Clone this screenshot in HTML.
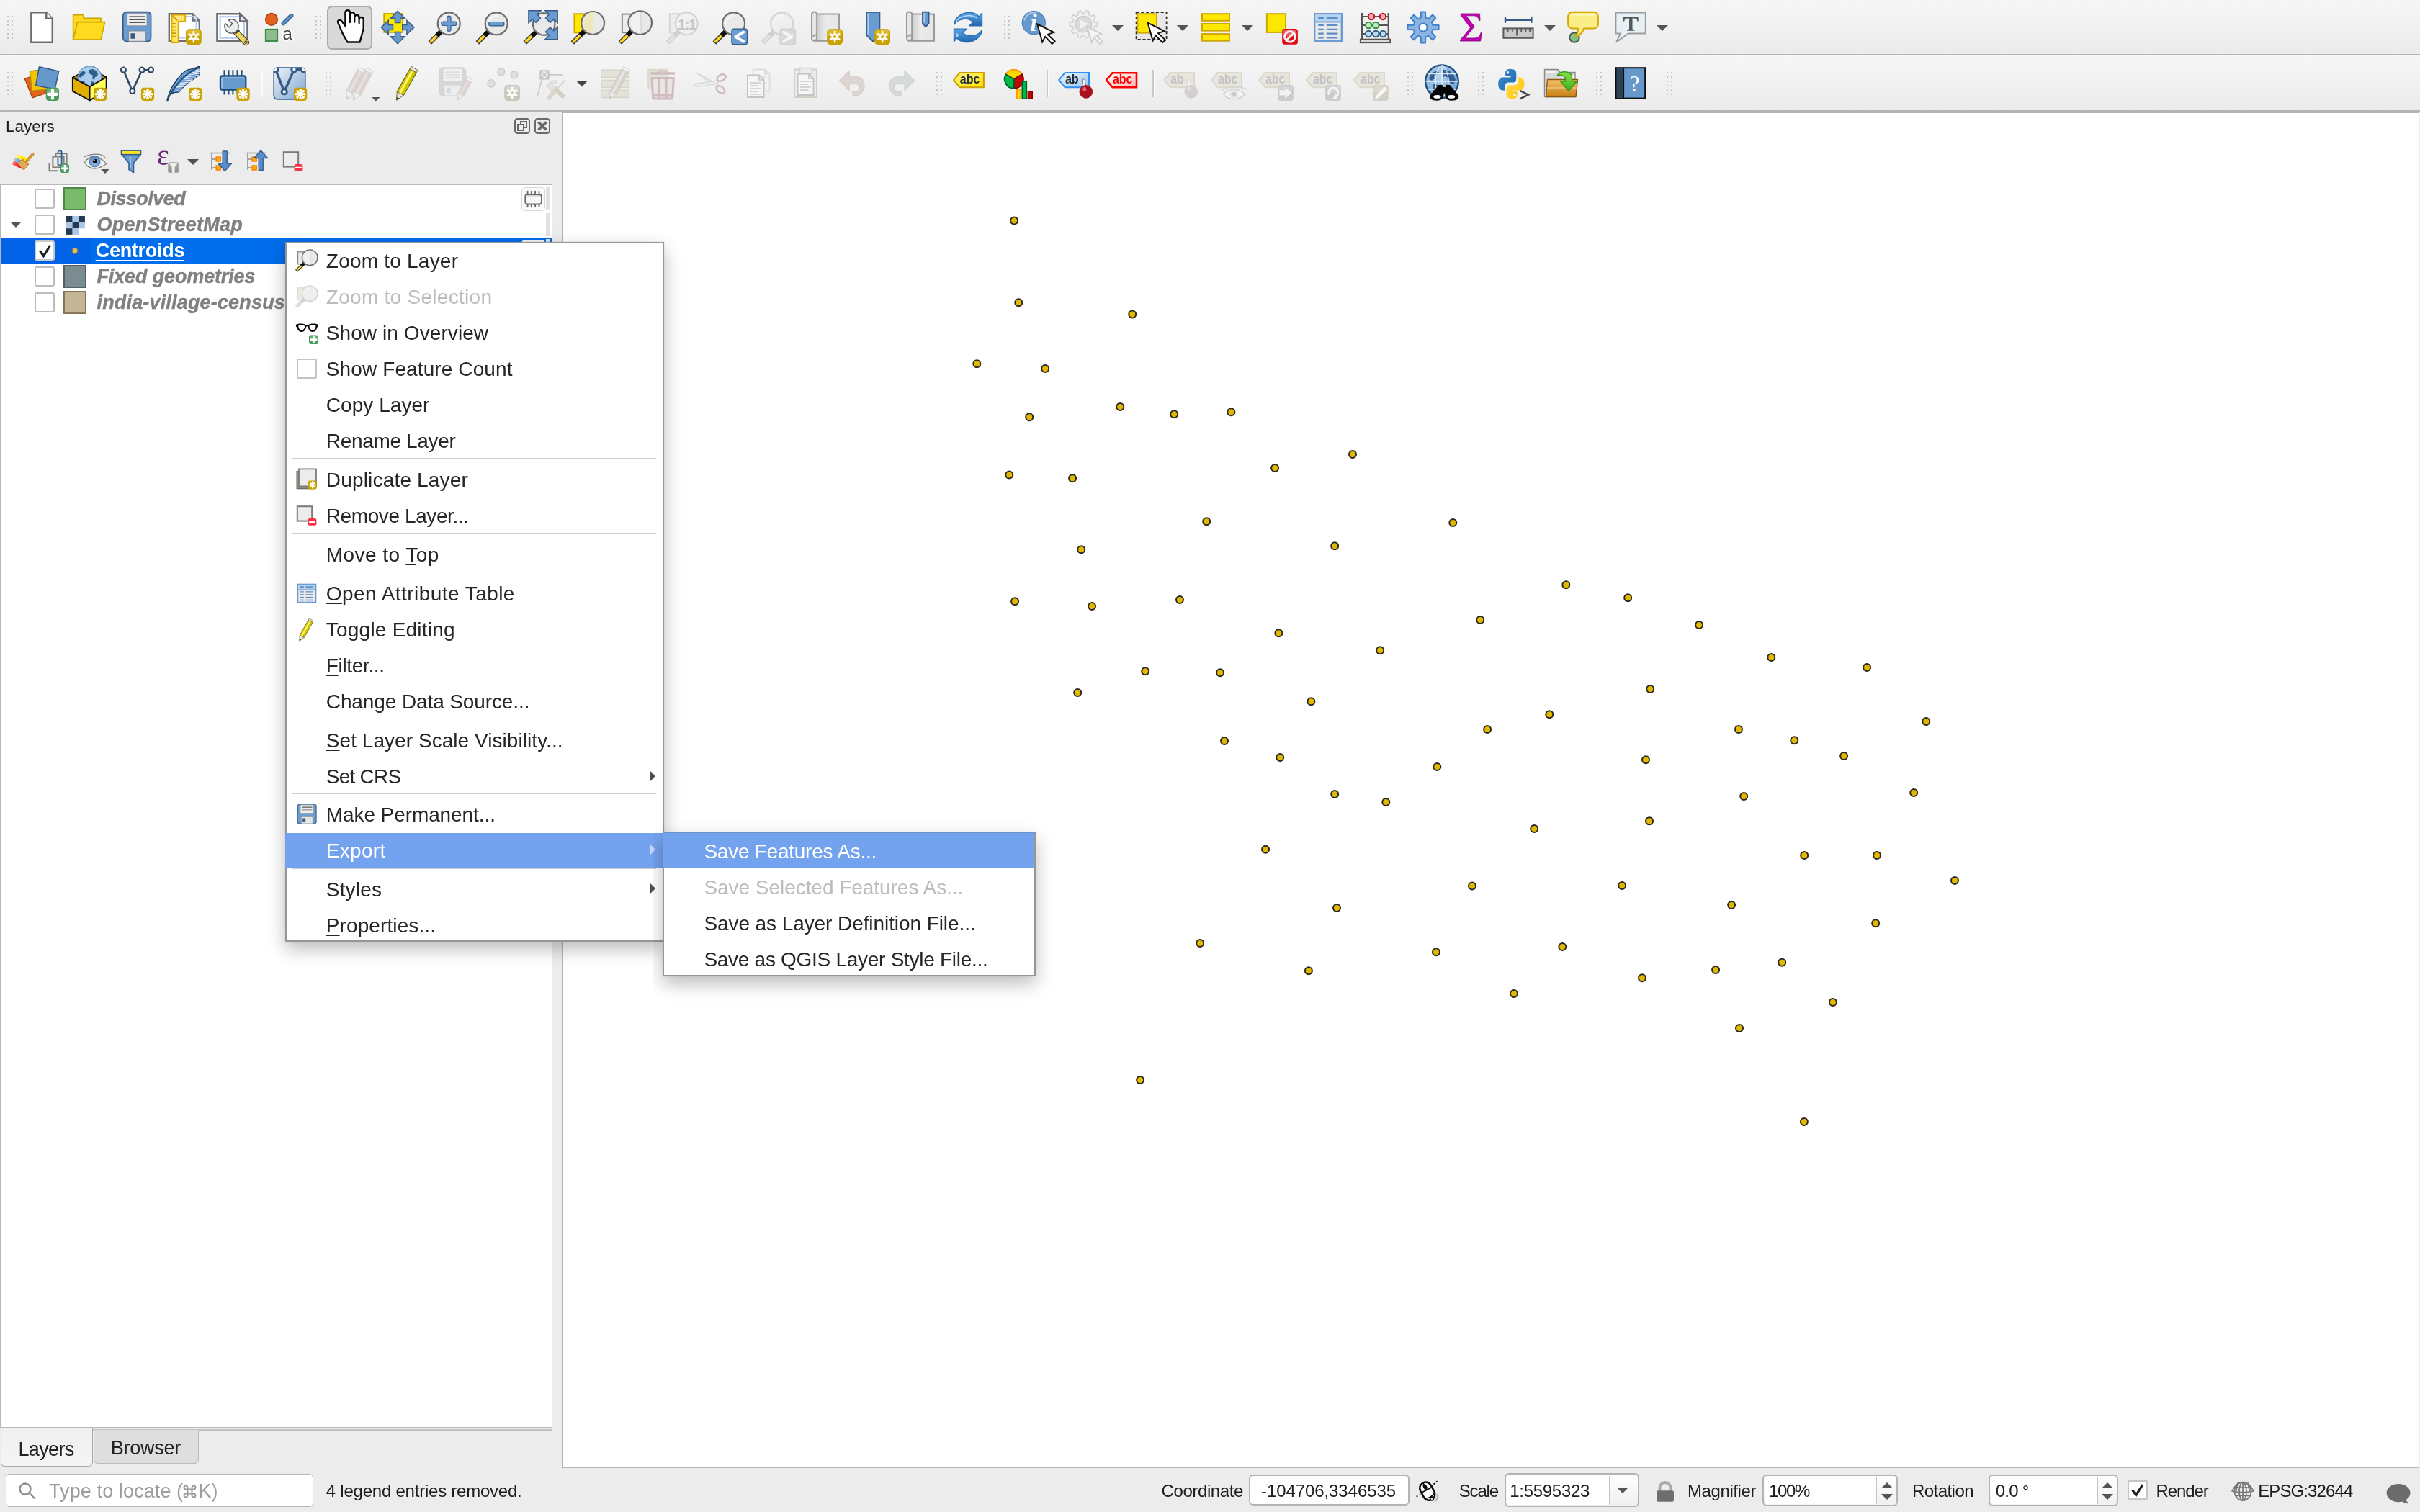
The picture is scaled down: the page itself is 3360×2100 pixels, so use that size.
<!DOCTYPE html>
<html><head><meta charset="utf-8"><title>QGIS</title><style>
html,body{margin:0;padding:0}
body{width:3360px;height:2100px;overflow:hidden;position:relative;background:#ececec;font-family:"Liberation Sans",sans-serif}
#w{position:absolute;left:0;top:0;width:3360px;height:2100px;will-change:transform}
#w>*{position:absolute;display:block}
.t{white-space:nowrap}
u{text-decoration:underline;text-decoration-thickness:1.3px;text-underline-offset:4px}
svg{overflow:visible}
</style></head><body><div id="w">
<div style="left:0px;top:0px;width:3360px;height:75px;background:linear-gradient(#f6f6f6,#ebebeb)"></div>
<div style="left:0px;top:75px;width:3360px;height:2px;background:#b6b6b6"></div>
<div style="left:0px;top:77px;width:3360px;height:76px;background:linear-gradient(#f6f6f6,#ebebeb)"></div>
<div style="left:0px;top:153px;width:3360px;height:2px;background:#b2b2b2"></div>
<svg style="left:10px;top:22px;width:8px;height:32px" viewBox="0 0 8 32" fill="#c4c4c4"><rect x="0" y="0" width="2" height="2"/><rect x="6" y="0" width="2" height="2"/><rect x="0" y="6" width="2" height="2"/><rect x="6" y="6" width="2" height="2"/><rect x="0" y="12" width="2" height="2"/><rect x="6" y="12" width="2" height="2"/><rect x="0" y="18" width="2" height="2"/><rect x="6" y="18" width="2" height="2"/><rect x="0" y="24" width="2" height="2"/><rect x="6" y="24" width="2" height="2"/><rect x="0" y="30" width="2" height="2"/><rect x="6" y="30" width="2" height="2"/></svg>
<svg style="left:438px;top:22px;width:8px;height:32px" viewBox="0 0 8 32" fill="#c4c4c4"><rect x="0" y="0" width="2" height="2"/><rect x="6" y="0" width="2" height="2"/><rect x="0" y="6" width="2" height="2"/><rect x="6" y="6" width="2" height="2"/><rect x="0" y="12" width="2" height="2"/><rect x="6" y="12" width="2" height="2"/><rect x="0" y="18" width="2" height="2"/><rect x="6" y="18" width="2" height="2"/><rect x="0" y="24" width="2" height="2"/><rect x="6" y="24" width="2" height="2"/><rect x="0" y="30" width="2" height="2"/><rect x="6" y="30" width="2" height="2"/></svg>
<svg style="left:1394px;top:22px;width:8px;height:32px" viewBox="0 0 8 32" fill="#c4c4c4"><rect x="0" y="0" width="2" height="2"/><rect x="6" y="0" width="2" height="2"/><rect x="0" y="6" width="2" height="2"/><rect x="6" y="6" width="2" height="2"/><rect x="0" y="12" width="2" height="2"/><rect x="6" y="12" width="2" height="2"/><rect x="0" y="18" width="2" height="2"/><rect x="6" y="18" width="2" height="2"/><rect x="0" y="24" width="2" height="2"/><rect x="6" y="24" width="2" height="2"/><rect x="0" y="30" width="2" height="2"/><rect x="6" y="30" width="2" height="2"/></svg>
<div style="left:454.3px;top:8px;width:63.2px;height:61.4px;background:#d9d9d9;border:2px solid #ababab;border-radius:7px;box-sizing:border-box"></div>
<svg style="left:34.0px;top:14.0px;width:48px;height:48px;" viewBox="0 0 48 48"><path d="M9.4 3.2H30.2L38.8 11.8V44.8H9.4Z" fill="#fff" stroke="#6e6e6e" stroke-width="2.5"/><path d="M30.2 3.2V11.8H38.8" fill="#fff" stroke="#6e6e6e" stroke-width="2.5"/></svg>
<svg style="left:99.4px;top:14.0px;width:48px;height:48px;" viewBox="0 0 48 48"><path d="M2.6 40.5V6.6H17V11.2H41V40.5Z" fill="#ffd91e" stroke="#c9a300" stroke-width="1.6" stroke-linejoin="round"/><path d="M8.6 16.6H46.6L41 41H2.6Z" fill="#ffdb20" stroke="#c9a300" stroke-width="1.6" stroke-linejoin="round"/></svg>
<svg style="left:165.8px;top:14.0px;width:48px;height:48px;" viewBox="0 0 48 48"><rect x="4.8" y="2.6" width="38.8" height="41" rx="5" fill="#6a9bd1" stroke="#355b86" stroke-width="1.6"/><rect x="10.6" y="4.4" width="27.4" height="17.4" rx="1.5" fill="#ececec" stroke="#8a8a8a" stroke-opacity="0.8" stroke-width="1"/><path d="M13.4 9.2H35.2M13.4 13.2H35.2M13.4 17.2H35.2" stroke="#5a5a5a" stroke-width="1.8"/><rect x="12.4" y="29" width="24" height="14.4" rx="1.2" fill="#e6e6e6" stroke="#7d8792" stroke-opacity="0.9" stroke-width="1.2"/><rect x="15.4" y="32.2" width="5.8" height="7.6" fill="#3a5a80"/></svg>
<svg style="left:232.2px;top:14.0px;width:48px;height:48px;" viewBox="0 0 48 48"><path d="M2.8 5.2H35.5L44.8 14.5V43H2.8Z" fill="#fff" stroke="#6e6e6e" stroke-width="2.4"/><path d="M35.5 5.2V14.5H44.8" fill="#f4f4f4" stroke="#6e6e6e" stroke-width="2.4"/><path d="M14 9H40.5V38.5H14" fill="none" stroke="#b9ccf5" stroke-width="2.2"/><path d="M6.6 6.6H25.2V15.6H15.6V45H6.6Z" fill="#ffe873" stroke="#d9a900" stroke-width="1.8"/><path d="M7.5 15.5V44H11" fill="none" stroke="#ffd21f" stroke-width="1.6"/><path d="M6.6 19H12M6.6 23.4H12M6.6 27.8H12M6.6 32.2H12M6.6 36.6H12M6.6 7L14 14.5" stroke="#cf9d00" stroke-width="1.8"/><rect x="26" y="26.2" width="21.8" height="21.8" rx="4.5" fill="#c9a100"/><rect x="27.5" y="27.7" width="18.8" height="9" rx="3" fill="#e0bf3a" opacity=".8"/><line x1="36.9" y1="28.9" x2="36.9" y2="45.3" stroke="#fff" stroke-width="2.6"/><line x1="44.0" y1="33.0" x2="29.8" y2="41.2" stroke="#fff" stroke-width="2.6"/><line x1="44.0" y1="41.2" x2="29.8" y2="33.0" stroke="#fff" stroke-width="2.6"/><circle cx="36.9" cy="37.1" r="4.6" fill="#fff"/><circle cx="36.9" cy="37.1" r="2" fill="#c9a100"/></svg>
<svg style="left:298.6px;top:14.0px;width:48px;height:48px;" viewBox="0 0 48 48"><path d="M2.400 5.200H34.200L44.400 15.400V43H2.400Z" fill="#fff" stroke="#6e6e6e" stroke-width="2.400"/><rect x="6.600" y="9.200" width="33.400" height="29.600" fill="none" stroke="#b9ccf5" stroke-width="2.200"/><path d="M34.200 5.200V15.400H44.400Z" fill="#f1f1f1" stroke="#6e6e6e" stroke-width="2.400" stroke-linejoin="miter"/><path d="M26 27.500L42.800 45" stroke="#3d3523" stroke-width="8.600" stroke-linecap="round"/><path d="M26 27.500L42.800 45" stroke="#f2d563" stroke-width="6.200" stroke-linecap="round"/><path d="M27.500 32.500l5.500-5" stroke="#3d3523" stroke-width="2.800"/><circle cx="42.400" cy="44.600" r="1.900" fill="#b9b9b0" stroke="#3d3523" stroke-width=".900"/><path d="M18.5 13.8L23.8 19.1L19.1 23.8L13.8 18.5A9.6 9.6 0 1 0 18.5 13.8Z" fill="#e9eeee" stroke="#5d5d5d" stroke-width="1.400" stroke-linejoin="round"/></svg>
<svg style="left:365.0px;top:14.0px;width:48px;height:48px;" viewBox="0 0 48 48"><circle cx="12" cy="12.900" r="8.300" fill="#e2621e" stroke="#a34210" stroke-width="1.600"/><path d="M28.400 18.600L39.600 7.600" stroke="#355b86" stroke-width="5.600" stroke-linecap="round"/><path d="M28.400 18.600L39.600 7.600" stroke="#5c8fc9" stroke-width="3.400" stroke-linecap="round"/><rect x="3.800" y="26.800" width="16.400" height="16.200" fill="#8cbb8c" stroke="#38883f" stroke-width="1.800"/><text x="27.400" y="41.400" font-family="Liberation Sans" font-size="24" fill="#fff" stroke="#fff" stroke-width="3.500" stroke-linejoin="round">a</text><text x="27.400" y="41.400" font-family="Liberation Sans" font-size="24" fill="#414141">a</text></svg>
<svg style="left:461.9px;top:14.0px;width:48px;height:48px;" viewBox="0 0 48 48"><path d="M7.200 17.200C6.200 14.200 10 12.400 12.200 15L17.400 22V3.400C17.400 -0.900 23.900 -0.900 23.900 3.400V6C24.400 2.400 30.200 2.600 30.300 6.400V9.400C31 6 36.400 6.400 36.600 9.800V12.400C37.400 9 42.400 9.400 42.700 12.800V25.700L37.600 44.500H20.400C17.500 39 14 34 12.500 29.600Z" fill="#fff" stroke="#0c0c0c" stroke-width="2.400" stroke-linejoin="round"/><path d="M23.900 5V17.100M30.300 8V16.700M36.600 11V18.400" stroke="#0c0c0c" stroke-width="2.200" stroke-linecap="round"/></svg>
<svg style="left:527.8px;top:14.0px;width:48px;height:48px;" viewBox="0 0 48 48"><rect x="5.300" y="5" width="25.800" height="25.800" fill="#ffe800" stroke="#cfa500" stroke-width="2"/><path d="M30.7 20.4L36.9 20.4L36.9 14.2L46.9 24.0L36.9 33.8L36.9 27.6L30.7 27.6Z" fill="#6699cc" stroke="#3a5f86" stroke-width="1.500" stroke-linejoin="miter"/><path d="M27.8 30.6L27.8 36.8L33.9 36.8L24.1 46.8L14.3 36.8L20.5 36.8L20.5 30.6Z" fill="#6699cc" stroke="#3a5f86" stroke-width="1.500" stroke-linejoin="miter"/><path d="M17.5 27.6L11.3 27.6L11.3 33.8L1.3 24.0L11.3 14.2L11.3 20.4L17.5 20.4Z" fill="#6699cc" stroke="#3a5f86" stroke-width="1.500" stroke-linejoin="miter"/><path d="M20.5 17.4L20.4 11.2L14.3 11.2L24.1 1.2L33.9 11.2L27.7 11.2L27.8 17.4Z" fill="#6699cc" stroke="#3a5f86" stroke-width="1.500" stroke-linejoin="miter"/></svg>
<svg style="left:592.6px;top:14.0px;width:48px;height:48px;" viewBox="0 0 48 48"><line x1="18.9" y1="30.2" x2="3.8" y2="45.5" stroke="#3b3b3b" stroke-width="6.4"/><line x1="13.6" y1="35.6" x2="4.7" y2="44.6" stroke="#ffd321" stroke-width="3.5"/><line x1="18.9" y1="30.2" x2="13.6" y2="35.6" stroke="#0c0c0c" stroke-width="6.4"/><circle cx="30.2" cy="18.8" r="15.5" fill="#e9e9e9" stroke="#6c6c6c" stroke-width="2.2"/><path d="M19.9 18.0A11.0 11.0 0 0 1 31.0 7.8" fill="none" stroke="#ffffff" stroke-opacity="0.55" stroke-width="2.6" stroke-linecap="round"/><path d="M30.400 10.800V26.800M22.400 18.800H38.400" stroke="#355b86" stroke-width="6.4" stroke-linecap="round"/><path d="M30.400 10.800V26.800M22.400 18.800H38.400" stroke="#6a9bd1" stroke-width="4.2" stroke-linecap="round"/></svg>
<svg style="left:658.9px;top:14.0px;width:48px;height:48px;" viewBox="0 0 48 48"><line x1="18.9" y1="30.2" x2="3.8" y2="45.5" stroke="#3b3b3b" stroke-width="6.4"/><line x1="13.6" y1="35.6" x2="4.7" y2="44.6" stroke="#ffd321" stroke-width="3.5"/><line x1="18.9" y1="30.2" x2="13.6" y2="35.6" stroke="#0c0c0c" stroke-width="6.4"/><circle cx="30.2" cy="18.8" r="15.5" fill="#e9e9e9" stroke="#6c6c6c" stroke-width="2.2"/><path d="M19.9 18.0A11.0 11.0 0 0 1 31.0 7.8" fill="none" stroke="#ffffff" stroke-opacity="0.55" stroke-width="2.6" stroke-linecap="round"/><path d="M22.200 19.200H38.400" stroke="#355b86" stroke-width="6.4" stroke-linecap="round"/><path d="M22.200 19.200H38.400" stroke="#6a9bd1" stroke-width="4.2" stroke-linecap="round"/></svg>
<svg style="left:724.6px;top:14.0px;width:48px;height:48px;" viewBox="0 0 48 48"><line x1="18.9" y1="30.7" x2="3.8" y2="45.5" stroke="#3b3b3b" stroke-width="6.4"/><line x1="13.5" y1="35.9" x2="4.7" y2="44.6" stroke="#ffd321" stroke-width="3.5"/><line x1="18.9" y1="30.7" x2="13.5" y2="35.9" stroke="#0c0c0c" stroke-width="6.4"/><circle cx="30.2" cy="19.5" r="15.3" fill="#e9e9e9" stroke="#6c6c6c" stroke-width="2.2"/><path d="M20.0 18.7A10.8 10.8 0 0 1 31.0 8.7" fill="none" stroke="#ffffff" stroke-opacity="0.55" stroke-width="2.6" stroke-linecap="round"/><path d="M8.9 0.7L26.1 0.7L20.7 6.1L25.6 11.0L19.2 17.4L14.3 12.5L8.9 17.9Z" fill="#6a9bd1" stroke="#355b86" stroke-width="1.4"/><path d="M49.2 0.7L32.0 0.7L37.4 6.1L32.5 11.0L38.9 17.4L43.8 12.5L49.2 17.9Z" fill="#6a9bd1" stroke="#355b86" stroke-width="1.4"/><path d="M49.2 40.6L32.0 40.6L37.4 35.2L32.5 30.3L38.9 23.9L43.8 28.8L49.2 23.4Z" fill="#6a9bd1" stroke="#355b86" stroke-width="1.4"/></svg>
<svg style="left:790.5px;top:14.0px;width:48px;height:48px;" viewBox="0 0 48 48"><rect x="6.5" y="5.300" width="26" height="26" fill="#ffe800" stroke="#cfa500" stroke-width="2"/><line x1="20.3" y1="29.4" x2="3.8" y2="45.5" stroke="#3b3b3b" stroke-width="6.4"/><line x1="14.9" y1="34.7" x2="4.7" y2="44.6" stroke="#ffd321" stroke-width="3.5"/><line x1="20.3" y1="29.4" x2="14.9" y2="34.7" stroke="#0c0c0c" stroke-width="6.4"/><circle cx="32.1" cy="17.9" r="15.9" fill="#e9e9e9" stroke="#6c6c6c" stroke-width="2.2"/><path d="M21.6 17.0A11.2 11.2 0 0 1 33.0 6.7" fill="none" stroke="#ffffff" stroke-opacity="0.55" stroke-width="2.6" stroke-linecap="round"/><path d="M33.500 2.300A15.700 15.700 0 0 0 33.500 33.500Z" fill="#efe6b6" opacity=".9"/></svg>
<svg style="left:856.6px;top:14.0px;width:48px;height:48px;" viewBox="0 0 48 48"><rect x="6.8" y="5.600" width="26" height="25.600" fill="#ececec" stroke="#8a8a8a" stroke-width="2"/><line x1="19.7" y1="29.6" x2="3.8" y2="45.5" stroke="#3b3b3b" stroke-width="6.4"/><line x1="14.4" y1="34.9" x2="4.7" y2="44.6" stroke="#ffd321" stroke-width="3.5"/><line x1="19.7" y1="29.6" x2="14.4" y2="34.9" stroke="#0c0c0c" stroke-width="6.4"/><circle cx="31.7" cy="17.6" r="16.3" fill="#e9e9e9" stroke="#6c6c6c" stroke-width="2.2"/><path d="M20.9 16.7A11.5 11.5 0 0 1 32.6 6.1" fill="none" stroke="#ffffff" stroke-opacity="0.55" stroke-width="2.6" stroke-linecap="round"/><path d="M33 2.200A15.500 15.500 0 0 0 33 33Z" fill="#f1f1f1" opacity=".9"/><path d="M33 3V32.500" stroke="#cfcfcf" stroke-width="1"/></svg>
<svg style="left:922.6px;top:14.0px;width:48px;height:48px;" viewBox="0 0 48 48"><rect x="6.800" y="5.200" width="26" height="26" fill="#ededed" stroke="#d6d6d6" stroke-width="2"/><line x1="18.9" y1="30.2" x2="3.8" y2="45.5" stroke="#d2d2d2" stroke-width="6.4"/><line x1="13.6" y1="35.6" x2="4.7" y2="44.6" stroke="#e6e3dc" stroke-width="3.5"/><line x1="18.9" y1="30.2" x2="13.6" y2="35.6" stroke="#cfcfcf" stroke-width="6.4"/><circle cx="30.2" cy="18.8" r="15.5" fill="#efefef" stroke="#d3d3d3" stroke-width="2.2"/><path d="M19.9 18.0A11.0 11.0 0 0 1 31.0 7.8" fill="none" stroke="#ffffff" stroke-opacity="0.4" stroke-width="2.6" stroke-linecap="round"/><text x="30.400" y="26.600" text-anchor="middle" font-family="Liberation Sans" font-weight="bold" font-size="20" letter-spacing="-1.2" fill="#c6c6c6">1:1</text></svg>
<svg style="left:988.3px;top:14.0px;width:48px;height:48px;" viewBox="0 0 48 48"><line x1="19.2" y1="30.2" x2="3.8" y2="45.5" stroke="#3b3b3b" stroke-width="6.4"/><line x1="13.9" y1="35.5" x2="4.7" y2="44.6" stroke="#ffd321" stroke-width="3.5"/><line x1="19.2" y1="30.2" x2="13.9" y2="35.5" stroke="#0c0c0c" stroke-width="6.4"/><circle cx="30.6" cy="18.8" r="15.5" fill="#e9e9e9" stroke="#6c6c6c" stroke-width="2.2"/><path d="M20.3 18.0A11.0 11.0 0 0 1 31.4 7.8" fill="none" stroke="#ffffff" stroke-opacity="0.55" stroke-width="2.6" stroke-linecap="round"/><rect x="27.900" y="26.100" width="21.600" height="21.600" rx="3" fill="#6a9bd1" stroke="#355b86" stroke-width="1.3"/><path d="M44.200 30.600L33 37.100L44.200 43.400" fill="none" stroke="#fff" stroke-width="3.800" stroke-linecap="round" stroke-linejoin="round"/></svg>
<svg style="left:1054.6px;top:14.0px;width:48px;height:48px;" viewBox="0 0 48 48"><line x1="19.2" y1="30.2" x2="3.8" y2="45.5" stroke="#d2d2d2" stroke-width="6.4"/><line x1="13.9" y1="35.5" x2="4.7" y2="44.6" stroke="#e6e3dc" stroke-width="3.5"/><line x1="19.2" y1="30.2" x2="13.9" y2="35.5" stroke="#cfcfcf" stroke-width="6.4"/><circle cx="30.6" cy="18.8" r="15.5" fill="#efefef" stroke="#d3d3d3" stroke-width="2.2"/><path d="M20.3 18.0A11.0 11.0 0 0 1 31.4 7.8" fill="none" stroke="#ffffff" stroke-opacity="0.4" stroke-width="2.6" stroke-linecap="round"/><rect x="27.900" y="26.100" width="21.600" height="21.600" rx="3" fill="#d7dadd" stroke="#cfd2d5" stroke-width="1.3"/><path d="M33.200 30.600L44.400 37.100L33.200 43.400" fill="none" stroke="#f6f6f6" stroke-width="3.800" stroke-linecap="round" stroke-linejoin="round"/></svg>
<svg style="left:1123.9px;top:14.0px;width:48px;height:48px;" viewBox="0 0 48 48"><defs><linearGradient id="scg" x1="0" x2="1"><stop offset="0" stop-color="#c9c9c9"/><stop offset=".45" stop-color="#ebebeb"/><stop offset="1" stop-color="#e6e6e6"/></linearGradient></defs><path d="M10 5.500H41V42.800H7.500" fill="url(#scg)" stroke="#9a9a9a" stroke-width="2"/><path d="M10.200 37V6.200C10.200 1.400 3 1.400 3 6.200V38.500C3 44.500 10.200 43.900 10.200 37.500C10.200 33 4.800 34 5.200 37.500" fill="#e6e6e6" stroke="#9a9a9a" stroke-width="2" stroke-linejoin="round"/><rect x="24.2" y="26.2" width="21.8" height="21.8" rx="4.5" fill="#c9a100"/><rect x="25.7" y="27.7" width="18.8" height="9" rx="3" fill="#e0bf3a" opacity=".8"/><line x1="35.1" y1="28.9" x2="35.1" y2="45.3" stroke="#fff" stroke-width="2.6"/><line x1="42.2" y1="33.0" x2="28.0" y2="41.2" stroke="#fff" stroke-width="2.6"/><line x1="42.2" y1="41.2" x2="28.0" y2="33.0" stroke="#fff" stroke-width="2.6"/><circle cx="35.1" cy="37.1" r="4.6" fill="#fff"/><circle cx="35.1" cy="37.1" r="2" fill="#c9a100"/></svg>
<svg style="left:1189.8px;top:14.0px;width:48px;height:48px;" viewBox="0 0 48 48"><path d="M13 2.8H31.4V34.9L22.2 43.4L13 34.9Z" fill="#6a9bd1" stroke="#355b86" stroke-width="1.800" stroke-linejoin="miter"/><path d="M15.2 4.3V33.9" stroke="#a9c9ec" stroke-width="1.600"/><rect x="24.2" y="26.2" width="21.8" height="21.8" rx="4.5" fill="#c9a100"/><rect x="25.7" y="27.7" width="18.8" height="9" rx="3" fill="#e0bf3a" opacity=".8"/><line x1="35.1" y1="28.9" x2="35.1" y2="45.3" stroke="#fff" stroke-width="2.6"/><line x1="42.2" y1="33.0" x2="28.0" y2="41.2" stroke="#fff" stroke-width="2.6"/><line x1="42.2" y1="41.2" x2="28.0" y2="33.0" stroke="#fff" stroke-width="2.6"/><circle cx="35.1" cy="37.1" r="4.6" fill="#fff"/><circle cx="35.1" cy="37.1" r="2" fill="#c9a100"/></svg>
<svg style="left:1255.9px;top:14.0px;width:48px;height:48px;" viewBox="0 0 48 48"><defs><linearGradient id="scg" x1="0" x2="1"><stop offset="0" stop-color="#c9c9c9"/><stop offset=".45" stop-color="#ebebeb"/><stop offset="1" stop-color="#e6e6e6"/></linearGradient></defs><path d="M10 5.500H41V42.800H7.500" fill="url(#scg)" stroke="#9a9a9a" stroke-width="2"/><path d="M10.200 37V6.200C10.200 1.400 3 1.400 3 6.200V38.500C3 44.500 10.200 43.900 10.200 37.500C10.200 33 4.800 34 5.200 37.500" fill="#e6e6e6" stroke="#9a9a9a" stroke-width="2" stroke-linejoin="round"/><path d="M25 2.6H33.6V18.400000000000002L29.3 23.400000000000002L25 18.400000000000002Z" fill="#6a9bd1" stroke="#355b86" stroke-width="1.800" stroke-linejoin="miter"/><path d="M27.2 4.1V17.400000000000002" stroke="#a9c9ec" stroke-width="1.600"/></svg>
<svg style="left:1320.0px;top:14.0px;width:48px;height:48px;" viewBox="0 0 48 48"><defs><linearGradient id="rfg" x1="0" y1="0" x2="0" y2="1"><stop offset="0" stop-color="#5aa5e6"/><stop offset="1" stop-color="#2266ad"/></linearGradient></defs><path d="M4.600 20.500C5.500 4.500 29 -2.500 39.500 9L43.600 3.800V22H25.500L31.300 16.800C24.500 9.500 9.500 11.500 4.600 20.500Z" fill="url(#rfg)" stroke="#2a6cb3" stroke-width="1.200" stroke-linejoin="round"/><path d="M43.400 27.500C42.500 43.500 19 50.500 8.500 39L4.400 44.200V26H22.500L16.700 31.200C23.500 38.500 38.500 36.500 43.400 27.500Z" fill="url(#rfg)" stroke="#2a6cb3" stroke-width="1.200" stroke-linejoin="round"/><path d="M7 17C11 8 27 4.500 36.500 11" fill="none" stroke="#cfe6fa" stroke-width="1.600" opacity=".8"/><path d="M7.500 31L7 40L12 34.500" fill="#bcdcf6" opacity=".8"/></svg>
<svg style="left:1418.0px;top:14.0px;width:48px;height:48px;" viewBox="0 0 48 48"><circle cx="17.300" cy="17.600" r="16.300" fill="#6698cd" stroke="#4c7fb8" stroke-width="1"/><path d="M4.500 14A13.500 13.500 0 0 1 20 3.800" fill="none" stroke="#a9c8ea" stroke-width="2" stroke-linecap="round"/><text x="17.200" y="28.800" text-anchor="middle" font-family="Liberation Serif" font-style="italic" font-weight="bold" font-size="33" fill="#fff">i</text><path d="M22.2 19.4L45.2 30.9L36.7 33.9L46.7 43.4L42.7 46.9L33.2 36.9L29.2 44.4Z" fill="#fff" stroke="#111" stroke-width="2" stroke-linejoin="miter"/></svg>
<svg style="left:1484.0px;top:14.0px;width:48px;height:48px;" viewBox="0 0 48 48"><path d="M35.2 16.9L39.4 17.5L39.4 21.9L35.2 22.5L34.1 26.2L37.0 29.2L34.5 32.7L30.7 30.8L27.6 33.0L28.3 37.2L24.1 38.5L22.2 34.8L18.4 34.8L16.5 38.5L12.3 37.2L13.0 33.0L9.9 30.8L6.1 32.7L3.6 29.2L6.5 26.2L5.4 22.5L1.2 21.9L1.2 17.5L5.4 16.9L6.5 13.2L3.6 10.2L6.1 6.7L9.9 8.6L13.0 6.4L12.3 2.2L16.5 0.9L18.4 4.6L22.2 4.6L24.1 0.9L28.3 2.2L27.6 6.4L30.7 8.6L34.5 6.7L37.0 10.2L34.1 13.2Z" fill="#f0f0f0" stroke="#d1d1d1" stroke-width="1.500" stroke-linejoin="round"/><circle cx="20.300" cy="19.700" r="11.200" fill="#d8dadc" stroke="#cbcbcb" stroke-width="1.300"/><path d="M15.800 13.200L27.200 19.600L15.800 26Z" fill="#f1f1f1"/><path d="M25.4 23.0L45.6 33.1L38.2 35.8L47.0 44.1L43.4 47.2L35.1 38.4L31.6 45.0Z" fill="#f4f4f4" stroke="#cfcfcf" stroke-width="2" stroke-linejoin="miter"/></svg>
<svg style="left:1574.6px;top:14.0px;width:48px;height:48px;" viewBox="0 0 48 48"><rect x="2.600" y="3.100" width="42" height="37.800" fill="#e8e8e8" stroke="#2d2d2d" stroke-width="1.800" stroke-dasharray="4.200 2.600"/><rect x="4.400" y="5.300" width="26.600" height="26.300" fill="#ffe800" stroke="#cfa500" stroke-width="2"/><path d="M18.6 17.6L41.6 29.1L33.1 32.1L43.1 41.6L39.1 45.1L29.6 35.1L25.6 42.6Z" fill="#fff" stroke="#111" stroke-width="2" stroke-linejoin="miter"/></svg>
<svg style="left:1664.0px;top:14.0px;width:48px;height:48px;" viewBox="0 0 48 48"><rect x="5" y="5.2" width="38" height="9.600" fill="#ffe800" stroke="#cfa500" stroke-width="2"/><rect x="5" y="19" width="38" height="9.600" fill="#ffe800" stroke="#cfa500" stroke-width="2"/><rect x="5" y="33.1" width="38" height="9.600" fill="#ffe800" stroke="#cfa500" stroke-width="2"/></svg>
<svg style="left:1756.0px;top:14.0px;width:48px;height:48px;" viewBox="0 0 48 48"><rect x="2.900" y="5.200" width="26.200" height="25.700" fill="#ffe800" stroke="#cfa500" stroke-width="2"/><rect x="24.200" y="26.100" width="21.700" height="21.700" rx="3.500" fill="#e30613"/><rect x="25.700" y="27.600" width="18.700" height="9" rx="2.500" fill="#ee5a62"/><circle cx="35.050" cy="36.950" r="7.400" fill="none" stroke="#f0f0f0" stroke-width="3"/><path d="M29.600 42.300L40.500 31.600" stroke="#f0f0f0" stroke-width="3"/></svg>
<svg style="left:1820.0px;top:14.0px;width:48px;height:48px;" viewBox="0 0 48 48"><rect x="5.200" y="5.200" width="37.600" height="37.600" fill="#e9e9e9" stroke="#6a9bd1" stroke-width="2.400"/><rect x="6.400" y="6.400" width="35.200" height="9" fill="#b5d3f0"/><path d="M4.200 16.400H43.800" stroke="#6a9bd1" stroke-width="2"/><path d="M10.200 11H17.800M21.800 11H37.400" stroke="#5c8dc4" stroke-width="3.600"/><path d="M10.200 20.8H17.800M21.800 20.8H37.400" stroke="#5c8dc4" stroke-width="2.200"/><path d="M10.200 26.8H17.800M21.800 26.8H37.400" stroke="#5c8dc4" stroke-width="2.200"/><path d="M10.200 32.6H17.800M21.800 32.6H37.400" stroke="#5c8dc4" stroke-width="2.200"/><path d="M10.200 38.4H17.800M21.800 38.4H37.400" stroke="#5c8dc4" stroke-width="2.200"/></svg>
<svg style="left:1886.0px;top:14.0px;width:48px;height:48px;" viewBox="0 0 48 48"><path d="M5 4V42M41.800 4V42" stroke="#555" stroke-width="2.400"/><path d="M5 9H41.800M5 21H41.800M5 33H41.800" stroke="#555" stroke-width="2"/><rect x="2.800" y="40.600" width="41.400" height="4.600" fill="#d9d9d9" stroke="#555" stroke-width="1.800"/><circle cx="18" cy="9" r="4.200" fill="#ffb0b0" stroke="#c3161c" stroke-width="2"/><circle cx="34" cy="9" r="4.200" fill="#ffb0b0" stroke="#c3161c" stroke-width="2"/><circle cx="14.2" cy="21" r="4.200" fill="#b6f0b6" stroke="#3d8d47" stroke-width="2"/><circle cx="24.2" cy="21" r="4.200" fill="#b6f0b6" stroke="#3d8d47" stroke-width="2"/><circle cx="14.2" cy="33" r="4.200" fill="#b9dcf5" stroke="#2f5f80" stroke-width="2"/><circle cx="24.2" cy="33" r="4.200" fill="#b9dcf5" stroke="#2f5f80" stroke-width="2"/><circle cx="34.2" cy="33" r="4.200" fill="#b9dcf5" stroke="#2f5f80" stroke-width="2"/></svg>
<svg style="left:1952.0px;top:14.0px;width:48px;height:48px;" viewBox="0 0 48 48"><path d="M37.4 20.8L45.6 20.9L45.6 27.1L37.4 27.2L35.8 31.2L41.4 37.1L37.1 41.4L31.2 35.8L27.2 37.4L27.1 45.6L20.9 45.6L20.8 37.4L16.8 35.8L10.9 41.4L6.6 37.1L12.2 31.2L10.6 27.2L2.4 27.1L2.4 20.9L10.6 20.8L12.2 16.8L6.6 10.9L10.9 6.6L16.8 12.2L20.8 10.6L20.9 2.4L27.1 2.4L27.2 10.6L31.2 12.2L37.1 6.6L41.4 10.9L35.8 16.8Z" fill="#8db3df" stroke="#3c82d3" stroke-width="2" stroke-linejoin="round" fill-rule="evenodd"/><circle cx="24" cy="24" r="5.600" fill="#fff" stroke="#3c82d3" stroke-width="2"/></svg>
<svg style="left:2018.0px;top:14.0px;width:48px;height:48px;" viewBox="0 0 48 48"><path d="M10 5H36.500L37 14.600H35.600C34.600 9 32 7.800 27 7.800H17.500L29 22.800L16 39H28C33.500 39 36.500 37.500 38 31.500H39.500L37.500 43H9.500V41.600L23.500 24.600L10 6.500Z" fill="#c400b4" stroke="#7d0072" stroke-width=".800"/></svg>
<svg style="left:2084.0px;top:14.0px;width:48px;height:48px;" viewBox="0 0 48 48"><path d="M6 13.800H42.400M6 9.900V17.800M42.400 9.900V17.800" stroke="#355b86" stroke-width="2.400"/><rect x="3.400" y="25.400" width="41.200" height="13.400" fill="#c9c9c9" stroke="#5a5a5a" stroke-width="2"/><path d="M9.600 26V31M15.800 26V31M22 26V35.500M28.200 26V31M34.400 26V31M40 26V31" stroke="#5a5a5a" stroke-width="1.800"/></svg>
<svg style="left:2174.0px;top:14.0px;width:48px;height:48px;" viewBox="0 0 48 48"><circle cx="12" cy="38" r="6.700" fill="#7dc383" stroke="#555" stroke-width="2"/><path d="M9.500 2.800H38.500C42.500 2.800 44.800 5.500 44.800 9V19.500C44.800 23 42.500 25.500 38.500 25.500H25C23.500 31 19.500 35.500 13 36.500C16.500 33.500 17.200 29.500 16.800 25.500H9.500C5.500 25.500 3.200 23 3.200 19.500V9C3.200 5.500 5.500 2.800 9.500 2.800Z" fill="#fbee88" stroke="#d9a900" stroke-width="2.200" stroke-linejoin="round"/><path d="M7 6.500H41" stroke="#fdf7c0" stroke-width="2" stroke-linecap="round"/></svg>
<svg style="left:2240.0px;top:14.0px;width:48px;height:48px;" viewBox="0 0 48 48"><path d="M3.400 3.600H44.800V32.400H21L4 44.600L10 32.400H3.400Z" fill="#e6f0f5" stroke="#9c9c9c" stroke-width="2"/><path d="M14 9.600H34.600V15.500H33.300C33 12.800 32.200 11.600 29.800 11.600H26.500V25.300C26.500 26.800 27.200 27.300 29.600 27.400V28.800H19V27.400C21.400 27.300 22.100 26.800 22.100 25.300V11.600H18.800C16.400 11.600 15.600 12.800 15.300 15.500H14Z" fill="#555"/></svg>
<svg style="left:1543.7px;top:34.8px;width:16px;height:8px" viewBox="0 0 16 8"><path d="M0 0H16L8.0 8Z" fill="#555"/></svg>
<svg style="left:1634.0px;top:34.8px;width:16px;height:8px" viewBox="0 0 16 8"><path d="M0 0H16L8.0 8Z" fill="#555"/></svg>
<svg style="left:1723.9px;top:34.8px;width:16px;height:8px" viewBox="0 0 16 8"><path d="M0 0H16L8.0 8Z" fill="#555"/></svg>
<svg style="left:2144.0px;top:34.8px;width:16px;height:8px" viewBox="0 0 16 8"><path d="M0 0H16L8.0 8Z" fill="#555"/></svg>
<svg style="left:2300.0px;top:34.8px;width:16px;height:8px" viewBox="0 0 16 8"><path d="M0 0H16L8.0 8Z" fill="#555"/></svg>
<svg style="left:10px;top:100px;width:8px;height:32px" viewBox="0 0 8 32" fill="#c4c4c4"><rect x="0" y="0" width="2" height="2"/><rect x="6" y="0" width="2" height="2"/><rect x="0" y="6" width="2" height="2"/><rect x="6" y="6" width="2" height="2"/><rect x="0" y="12" width="2" height="2"/><rect x="6" y="12" width="2" height="2"/><rect x="0" y="18" width="2" height="2"/><rect x="6" y="18" width="2" height="2"/><rect x="0" y="24" width="2" height="2"/><rect x="6" y="24" width="2" height="2"/><rect x="0" y="30" width="2" height="2"/><rect x="6" y="30" width="2" height="2"/></svg>
<svg style="left:452px;top:100px;width:8px;height:32px" viewBox="0 0 8 32" fill="#c4c4c4"><rect x="0" y="0" width="2" height="2"/><rect x="6" y="0" width="2" height="2"/><rect x="0" y="6" width="2" height="2"/><rect x="6" y="6" width="2" height="2"/><rect x="0" y="12" width="2" height="2"/><rect x="6" y="12" width="2" height="2"/><rect x="0" y="18" width="2" height="2"/><rect x="6" y="18" width="2" height="2"/><rect x="0" y="24" width="2" height="2"/><rect x="6" y="24" width="2" height="2"/><rect x="0" y="30" width="2" height="2"/><rect x="6" y="30" width="2" height="2"/></svg>
<svg style="left:1300px;top:100px;width:8px;height:32px" viewBox="0 0 8 32" fill="#c4c4c4"><rect x="0" y="0" width="2" height="2"/><rect x="6" y="0" width="2" height="2"/><rect x="0" y="6" width="2" height="2"/><rect x="6" y="6" width="2" height="2"/><rect x="0" y="12" width="2" height="2"/><rect x="6" y="12" width="2" height="2"/><rect x="0" y="18" width="2" height="2"/><rect x="6" y="18" width="2" height="2"/><rect x="0" y="24" width="2" height="2"/><rect x="6" y="24" width="2" height="2"/><rect x="0" y="30" width="2" height="2"/><rect x="6" y="30" width="2" height="2"/></svg>
<svg style="left:1954px;top:100px;width:8px;height:32px" viewBox="0 0 8 32" fill="#c4c4c4"><rect x="0" y="0" width="2" height="2"/><rect x="6" y="0" width="2" height="2"/><rect x="0" y="6" width="2" height="2"/><rect x="6" y="6" width="2" height="2"/><rect x="0" y="12" width="2" height="2"/><rect x="6" y="12" width="2" height="2"/><rect x="0" y="18" width="2" height="2"/><rect x="6" y="18" width="2" height="2"/><rect x="0" y="24" width="2" height="2"/><rect x="6" y="24" width="2" height="2"/><rect x="0" y="30" width="2" height="2"/><rect x="6" y="30" width="2" height="2"/></svg>
<svg style="left:2052px;top:100px;width:8px;height:32px" viewBox="0 0 8 32" fill="#c4c4c4"><rect x="0" y="0" width="2" height="2"/><rect x="6" y="0" width="2" height="2"/><rect x="0" y="6" width="2" height="2"/><rect x="6" y="6" width="2" height="2"/><rect x="0" y="12" width="2" height="2"/><rect x="6" y="12" width="2" height="2"/><rect x="0" y="18" width="2" height="2"/><rect x="6" y="18" width="2" height="2"/><rect x="0" y="24" width="2" height="2"/><rect x="6" y="24" width="2" height="2"/><rect x="0" y="30" width="2" height="2"/><rect x="6" y="30" width="2" height="2"/></svg>
<svg style="left:2216px;top:100px;width:8px;height:32px" viewBox="0 0 8 32" fill="#c4c4c4"><rect x="0" y="0" width="2" height="2"/><rect x="6" y="0" width="2" height="2"/><rect x="0" y="6" width="2" height="2"/><rect x="6" y="6" width="2" height="2"/><rect x="0" y="12" width="2" height="2"/><rect x="6" y="12" width="2" height="2"/><rect x="0" y="18" width="2" height="2"/><rect x="6" y="18" width="2" height="2"/><rect x="0" y="24" width="2" height="2"/><rect x="6" y="24" width="2" height="2"/><rect x="0" y="30" width="2" height="2"/><rect x="6" y="30" width="2" height="2"/></svg>
<svg style="left:2314px;top:100px;width:8px;height:32px" viewBox="0 0 8 32" fill="#c4c4c4"><rect x="0" y="0" width="2" height="2"/><rect x="6" y="0" width="2" height="2"/><rect x="0" y="6" width="2" height="2"/><rect x="6" y="6" width="2" height="2"/><rect x="0" y="12" width="2" height="2"/><rect x="6" y="12" width="2" height="2"/><rect x="0" y="18" width="2" height="2"/><rect x="6" y="18" width="2" height="2"/><rect x="0" y="24" width="2" height="2"/><rect x="6" y="24" width="2" height="2"/><rect x="0" y="30" width="2" height="2"/><rect x="6" y="30" width="2" height="2"/></svg>
<svg style="left:34.0px;top:91.0px;width:48px;height:48px;" viewBox="0 0 48 48"><path d="M0.5 18.500L21 11.500L31 38L10.900 44.800Z" fill="#e2621e" stroke="#a8480f" stroke-width="1.400" stroke-linejoin="round"/><path d="M7.500 8L30 5L33 33L10.400 35.300Z" fill="#f5c400" stroke="#b38f00" stroke-width="1.400" stroke-linejoin="round"/><path d="M20.500 1.800L47.600 8L42.200 32.800L15.600 27.800Z" fill="#6698cc" stroke="#355b86" stroke-width="1.600" stroke-linejoin="round"/><rect x="29.8" y="30.7" width="18.2" height="18.2" rx="3.8" fill="#4c9a5e"/><rect x="31.0" y="31.9" width="15.799999999999999" height="8.1" rx="2.6" fill="#7ab888" opacity=".75"/><path d="M38.9 33.9V45.699999999999996M33.0 39.8H44.8" stroke="#fff" stroke-width="4.2" stroke-linecap="round"/></svg>
<svg style="left:100.0px;top:91.0px;width:48px;height:48px;" viewBox="0 0 48 48"><path d="M0.800 16.600L24.600 4L47.600 16L24.600 29Z" fill="#a88200" stroke="#111" stroke-width="1.600" stroke-linejoin="round"/><circle cx="24.600" cy="17.200" r="16.400" fill="#a9cbea" stroke="#5d8fc4" stroke-width="1.200"/><path d="M13 9c3-2 5-1 6 1l-2 3-3 1-1 3-3-1c-1-3 1-5 3-7zM24 6l5-1 4 2 3 4-1 4-3 1-1 4-3-2 1-4-3-2-3-1zM13 21l4 1 2 4-1 5-3-2zM27 22l4 1 1 4-3 4-2-4z" fill="#2d5d8d"/><path d="M0.800 16.600L24.600 29.400V48.400L0.800 35.600Z" fill="#e3ad00" stroke="#111" stroke-width="1.800" stroke-linejoin="round"/><path d="M24.600 29.400L47.600 16.200V35.400L24.600 48.400Z" fill="#ffff5a" stroke="#111" stroke-width="1.800" stroke-linejoin="round"/><rect x="30.2" y="30.7" width="18.2" height="18.2" rx="3.8" fill="#c9a100"/><line x1="41.0" y1="39.8" x2="44.9" y2="39.8" stroke="#fff" stroke-width="2.5" stroke-linecap="round"/><circle cx="45.1" cy="39.8" r="1.75" fill="#fff"/><line x1="40.5" y1="41.0" x2="43.3" y2="43.8" stroke="#fff" stroke-width="2.5" stroke-linecap="round"/><circle cx="43.4" cy="43.9" r="1.75" fill="#fff"/><line x1="39.3" y1="41.5" x2="39.3" y2="45.4" stroke="#fff" stroke-width="2.5" stroke-linecap="round"/><circle cx="39.3" cy="45.6" r="1.75" fill="#fff"/><line x1="38.1" y1="41.0" x2="35.3" y2="43.8" stroke="#fff" stroke-width="2.5" stroke-linecap="round"/><circle cx="35.2" cy="43.9" r="1.75" fill="#fff"/><line x1="37.6" y1="39.8" x2="33.7" y2="39.8" stroke="#fff" stroke-width="2.5" stroke-linecap="round"/><circle cx="33.5" cy="39.8" r="1.75" fill="#fff"/><line x1="38.1" y1="38.6" x2="35.3" y2="35.8" stroke="#fff" stroke-width="2.5" stroke-linecap="round"/><circle cx="35.2" cy="35.7" r="1.75" fill="#fff"/><line x1="39.3" y1="38.1" x2="39.3" y2="34.2" stroke="#fff" stroke-width="2.5" stroke-linecap="round"/><circle cx="39.3" cy="34.0" r="1.75" fill="#fff"/><line x1="40.5" y1="38.6" x2="43.3" y2="35.8" stroke="#fff" stroke-width="2.5" stroke-linecap="round"/><circle cx="43.4" cy="35.7" r="1.75" fill="#fff"/></svg>
<svg style="left:166.0px;top:91.0px;width:48px;height:48px;" viewBox="0 0 48 48"><line x1="5.4" y1="6.2" x2="17.8" y2="35.6" stroke="#2c4a68" stroke-width="2.6"/><line x1="17.8" y1="35.6" x2="31.1" y2="6.2" stroke="#2c4a68" stroke-width="2.6"/><line x1="31.1" y1="6.2" x2="43.5" y2="6.2" stroke="#2c4a68" stroke-width="2.6"/><circle cx="5.4" cy="6.2" r="3.5" fill="#f3f3f3" stroke="#2c4a68" stroke-width="2.2"/><circle cx="31.1" cy="6.2" r="3.5" fill="#f3f3f3" stroke="#2c4a68" stroke-width="2.2"/><circle cx="43.5" cy="6.2" r="3.5" fill="#f3f3f3" stroke="#2c4a68" stroke-width="2.2"/><circle cx="17.8" cy="35.6" r="3.5" fill="#f3f3f3" stroke="#2c4a68" stroke-width="2.2"/><rect x="29.9" y="30.7" width="18.2" height="18.2" rx="3.8" fill="#c9a100"/><line x1="40.7" y1="39.8" x2="44.6" y2="39.8" stroke="#fff" stroke-width="2.5" stroke-linecap="round"/><circle cx="44.8" cy="39.8" r="1.75" fill="#fff"/><line x1="40.2" y1="41.0" x2="43.0" y2="43.8" stroke="#fff" stroke-width="2.5" stroke-linecap="round"/><circle cx="43.1" cy="43.9" r="1.75" fill="#fff"/><line x1="39.0" y1="41.5" x2="39.0" y2="45.4" stroke="#fff" stroke-width="2.5" stroke-linecap="round"/><circle cx="39.0" cy="45.6" r="1.75" fill="#fff"/><line x1="37.8" y1="41.0" x2="35.0" y2="43.8" stroke="#fff" stroke-width="2.5" stroke-linecap="round"/><circle cx="34.9" cy="43.9" r="1.75" fill="#fff"/><line x1="37.3" y1="39.8" x2="33.4" y2="39.8" stroke="#fff" stroke-width="2.5" stroke-linecap="round"/><circle cx="33.2" cy="39.8" r="1.75" fill="#fff"/><line x1="37.8" y1="38.6" x2="35.0" y2="35.8" stroke="#fff" stroke-width="2.5" stroke-linecap="round"/><circle cx="34.9" cy="35.7" r="1.75" fill="#fff"/><line x1="39.0" y1="38.1" x2="39.0" y2="34.2" stroke="#fff" stroke-width="2.5" stroke-linecap="round"/><circle cx="39.0" cy="34.0" r="1.75" fill="#fff"/><line x1="40.2" y1="38.6" x2="43.0" y2="35.8" stroke="#fff" stroke-width="2.5" stroke-linecap="round"/><circle cx="43.1" cy="35.7" r="1.75" fill="#fff"/></svg>
<svg style="left:232.0px;top:91.0px;width:48px;height:48px;" viewBox="0 0 48 48"><defs><clipPath id="fth"><path d="M44.8 1.2C45.4 5 45.6 9 44.8 12.4C43 15 36 19.5 30.7 22.8C27 25.5 24 28.5 22.7 29.7L16.3 37.1L6 37.8L9.4 39.4L4.6 39.6C3.4 42.5 2 46 0.9 48.8L-0.1 48.2C1 44 2.6 39 4.4 34.7C6.5 29.500 9.5 25 12.8 20.8C15.5 17 18 14 20.8 11.4C23 9.3 25.5 7.5 27.7 6.4C30.5 5.2 33 5.2 35.1 4.7C38.5 3.8 42 2.6 44.8 1.2Z"/></clipPath></defs><path d="M44.8 1.2C45.4 5 45.6 9 44.8 12.4C43 15 36 19.5 30.7 22.8C27 25.5 24 28.5 22.7 29.7L16.3 37.1L6 37.8L9.4 39.4L4.6 39.6C3.4 42.5 2 46 0.9 48.8L-0.1 48.2C1 44 2.6 39 4.4 34.7C6.5 29.500 9.5 25 12.8 20.8C15.5 17 18 14 20.8 11.4C23 9.3 25.5 7.5 27.7 6.4C30.5 5.2 33 5.2 35.1 4.7C38.5 3.8 42 2.6 44.8 1.2Z" fill="#6197d0" stroke="#1f3e5f" stroke-width="1.300" stroke-linejoin="round"/><path d="M37.1 7.6L48 4.8M33.0 10.4L48 7.6M29.6 13.2L48 10.4M26.2 16.0L48 13.2M23.0 18.8L48 16.0M20.4 21.6L48 18.8M17.9 24.4L48 21.6M15.4 27.2L48 24.4M13.1 30.0L48 27.2M11.2 32.8L48 30.0M9.2 35.6L48 32.8" stroke="#eef4fb" stroke-width="1.300" opacity=".9" clip-path="url(#fth)"/><path d="M22 15.500L26.500 11M15.500 24L19 19.800" stroke="#dbe8f6" stroke-width="1" opacity=".8"/><path d="M44.6 1.6C38 6 32 9 27.7 11.9C23.5 15.500 20 19 16.8 22.8C12.5 28 8 34 4.6 39.4" fill="none" stroke="#1f3e5f" stroke-width="1.700"/><rect x="30" y="30.7" width="18.2" height="18.2" rx="3.8" fill="#c9a100"/><line x1="40.8" y1="39.8" x2="44.7" y2="39.8" stroke="#fff" stroke-width="2.5" stroke-linecap="round"/><circle cx="44.9" cy="39.8" r="1.75" fill="#fff"/><line x1="40.3" y1="41.0" x2="43.1" y2="43.8" stroke="#fff" stroke-width="2.5" stroke-linecap="round"/><circle cx="43.2" cy="43.9" r="1.75" fill="#fff"/><line x1="39.1" y1="41.5" x2="39.1" y2="45.4" stroke="#fff" stroke-width="2.5" stroke-linecap="round"/><circle cx="39.1" cy="45.6" r="1.75" fill="#fff"/><line x1="37.9" y1="41.0" x2="35.1" y2="43.8" stroke="#fff" stroke-width="2.5" stroke-linecap="round"/><circle cx="35.0" cy="43.9" r="1.75" fill="#fff"/><line x1="37.4" y1="39.8" x2="33.5" y2="39.8" stroke="#fff" stroke-width="2.5" stroke-linecap="round"/><circle cx="33.3" cy="39.8" r="1.75" fill="#fff"/><line x1="37.9" y1="38.6" x2="35.1" y2="35.8" stroke="#fff" stroke-width="2.5" stroke-linecap="round"/><circle cx="35.0" cy="35.7" r="1.75" fill="#fff"/><line x1="39.1" y1="38.1" x2="39.1" y2="34.2" stroke="#fff" stroke-width="2.5" stroke-linecap="round"/><circle cx="39.1" cy="34.0" r="1.75" fill="#fff"/><line x1="40.3" y1="38.6" x2="43.1" y2="35.8" stroke="#fff" stroke-width="2.5" stroke-linecap="round"/><circle cx="43.2" cy="35.7" r="1.75" fill="#fff"/></svg>
<svg style="left:298.5px;top:91.0px;width:48px;height:48px;" viewBox="0 0 48 48"><path d="M12.5 6.200V14M12.5 34V40.600" stroke="#1f4e7c" stroke-width="2"/><path d="M18.5 6.200V14M18.5 34V40.600" stroke="#1f4e7c" stroke-width="2"/><path d="M24.4 6.200V14M24.4 34V40.600" stroke="#1f4e7c" stroke-width="2"/><path d="M30.5 6.200V14M30.5 34V40.600" stroke="#1f4e7c" stroke-width="2"/><path d="M36.6 6.200V14M36.6 34V40.600" stroke="#1f4e7c" stroke-width="2"/><rect x="6.900" y="14.400" width="35.400" height="19.200" rx="2.800" fill="#6699cc" stroke="#1b4a78" stroke-width="2.200"/><path d="M9.200 17.200H40M9.200 17.200V31.400" stroke="#a9c9ec" stroke-width="1.400" fill="none"/><rect x="29.5" y="30.7" width="18.2" height="18.2" rx="3.8" fill="#c9a100"/><line x1="40.3" y1="39.8" x2="44.2" y2="39.8" stroke="#fff" stroke-width="2.5" stroke-linecap="round"/><circle cx="44.4" cy="39.8" r="1.75" fill="#fff"/><line x1="39.8" y1="41.0" x2="42.6" y2="43.8" stroke="#fff" stroke-width="2.5" stroke-linecap="round"/><circle cx="42.7" cy="43.9" r="1.75" fill="#fff"/><line x1="38.6" y1="41.5" x2="38.6" y2="45.4" stroke="#fff" stroke-width="2.5" stroke-linecap="round"/><circle cx="38.6" cy="45.6" r="1.75" fill="#fff"/><line x1="37.4" y1="41.0" x2="34.6" y2="43.8" stroke="#fff" stroke-width="2.5" stroke-linecap="round"/><circle cx="34.5" cy="43.9" r="1.75" fill="#fff"/><line x1="36.9" y1="39.8" x2="33.0" y2="39.8" stroke="#fff" stroke-width="2.5" stroke-linecap="round"/><circle cx="32.8" cy="39.8" r="1.75" fill="#fff"/><line x1="37.4" y1="38.6" x2="34.6" y2="35.8" stroke="#fff" stroke-width="2.5" stroke-linecap="round"/><circle cx="34.5" cy="35.7" r="1.75" fill="#fff"/><line x1="38.6" y1="38.1" x2="38.6" y2="34.2" stroke="#fff" stroke-width="2.5" stroke-linecap="round"/><circle cx="38.6" cy="34.0" r="1.75" fill="#fff"/><line x1="39.8" y1="38.6" x2="42.6" y2="35.8" stroke="#fff" stroke-width="2.5" stroke-linecap="round"/><circle cx="42.7" cy="35.7" r="1.75" fill="#fff"/></svg>
<svg style="left:378.0px;top:91.0px;width:48px;height:48px;" viewBox="0 0 48 48"><defs><linearGradient id="nvg" x1="0" y1="0" x2="1" y2="1"><stop offset="0" stop-color="#eef2f7"/><stop offset="1" stop-color="#7ea6d1"/></linearGradient><clipPath id="nvc"><rect x="2.200" y="3" width="43.600" height="44" rx="5"/></clipPath></defs><rect x="2.200" y="3" width="43.600" height="44" rx="5" fill="url(#nvg)" stroke="#2d5a8a" stroke-width="1.600"/><g clip-path="url(#nvc)"><line x1="4.7" y1="5.5" x2="16.7" y2="36.4" stroke="#355b86" stroke-width="3.4"/><line x1="16.7" y1="36.4" x2="30.4" y2="5.5" stroke="#355b86" stroke-width="3.4"/><line x1="30.4" y1="5.5" x2="43.6" y2="5.5" stroke="#355b86" stroke-width="3.4"/><circle cx="4.7" cy="5.5" r="3.6" fill="#f6f6f6" stroke="#355b86" stroke-width="2.9"/><circle cx="30.4" cy="5.5" r="3.6" fill="#f6f6f6" stroke="#355b86" stroke-width="2.9"/><circle cx="43.6" cy="5.5" r="3.6" fill="#f6f6f6" stroke="#355b86" stroke-width="2.9"/><circle cx="16.7" cy="36.4" r="3.6" fill="#f6f6f6" stroke="#355b86" stroke-width="2.9"/></g><rect x="30" y="30.7" width="18.2" height="18.2" rx="3.8" fill="#c9a100"/><line x1="40.8" y1="39.8" x2="44.7" y2="39.8" stroke="#fff" stroke-width="2.5" stroke-linecap="round"/><circle cx="44.9" cy="39.8" r="1.75" fill="#fff"/><line x1="40.3" y1="41.0" x2="43.1" y2="43.8" stroke="#fff" stroke-width="2.5" stroke-linecap="round"/><circle cx="43.2" cy="43.9" r="1.75" fill="#fff"/><line x1="39.1" y1="41.5" x2="39.1" y2="45.4" stroke="#fff" stroke-width="2.5" stroke-linecap="round"/><circle cx="39.1" cy="45.6" r="1.75" fill="#fff"/><line x1="37.9" y1="41.0" x2="35.1" y2="43.8" stroke="#fff" stroke-width="2.5" stroke-linecap="round"/><circle cx="35.0" cy="43.9" r="1.75" fill="#fff"/><line x1="37.4" y1="39.8" x2="33.5" y2="39.8" stroke="#fff" stroke-width="2.5" stroke-linecap="round"/><circle cx="33.3" cy="39.8" r="1.75" fill="#fff"/><line x1="37.9" y1="38.6" x2="35.1" y2="35.8" stroke="#fff" stroke-width="2.5" stroke-linecap="round"/><circle cx="35.0" cy="35.7" r="1.75" fill="#fff"/><line x1="39.1" y1="38.1" x2="39.1" y2="34.2" stroke="#fff" stroke-width="2.5" stroke-linecap="round"/><circle cx="39.1" cy="34.0" r="1.75" fill="#fff"/><line x1="40.3" y1="38.6" x2="43.1" y2="35.8" stroke="#fff" stroke-width="2.5" stroke-linecap="round"/><circle cx="43.2" cy="35.7" r="1.75" fill="#fff"/></svg>
<svg style="left:477.0px;top:91.0px;width:48px;height:48px;" viewBox="0 0 48 48"><g opacity="1"><path d="M4.0 47.5L14.2 39.8L4.4 34.7Z" fill="#efefef" stroke="#d2d2d2" stroke-width="1" stroke-linejoin="round"/><path d="M4.0 47.5L7.9 44.6L4.2 42.6Z" fill="#d0d0d0"/><path d="M14.2 39.8L29.1 10.9L19.4 5.8L4.4 34.7Z" fill="#dcd3d0" stroke="#d2d2d2" stroke-width="1.200" stroke-linejoin="round"/><path d="M10.0 37.6L25.0 8.8L22.1 7.2L7.1 36.1Z" fill="#e8e0de"/><path d="M29.1 10.9L30.9 7.5L21.1 2.5L19.4 5.8Z" fill="#f4f4f4" stroke="#d2d2d2" stroke-width="1" stroke-linejoin="round"/></g><g opacity="1"><path d="M13.5 48.5L23.8 40.9L14.1 35.7Z" fill="#efefef" stroke="#d2d2d2" stroke-width="1" stroke-linejoin="round"/><path d="M13.5 48.5L17.4 45.6L13.7 43.6Z" fill="#d0d0d0"/><path d="M23.8 40.9L39.6 11.4L29.9 6.3L14.1 35.7Z" fill="#dcd3d0" stroke="#d2d2d2" stroke-width="1.200" stroke-linejoin="round"/><path d="M19.7 38.7L35.4 9.2L32.5 7.7L16.8 37.1Z" fill="#e8e0de"/><path d="M39.6 11.4L41.3 8.1L31.7 2.9L29.9 6.3Z" fill="#f4f4f4" stroke="#d2d2d2" stroke-width="1" stroke-linejoin="round"/></g></svg>
<svg style="left:542.0px;top:91.0px;width:48px;height:48px;" viewBox="0 0 48 48"><g opacity="1"><path d="M8.5 48.3L18.5 41.3L9.3 36.1Z" fill="#e4e4e4" stroke="#6e6a1a" stroke-width="1" stroke-linejoin="round"/><path d="M8.5 48.3L12.3 45.6L8.8 43.7Z" fill="#444"/><path d="M18.5 41.3L36.2 9.9L27.1 4.7L9.3 36.1Z" fill="#d2c500" stroke="#6e6a1a" stroke-width="1.200" stroke-linejoin="round"/><path d="M14.6 39.1L32.3 7.7L29.6 6.1L11.9 37.5Z" fill="#fff766"/><path d="M36.2 9.9L38.1 6.6L28.9 1.4L27.1 4.7Z" fill="#ededed" stroke="#6e6a1a" stroke-width="1" stroke-linejoin="round"/></g></svg>
<svg style="left:608.0px;top:91.0px;width:48px;height:48px;" viewBox="0 0 48 48"><g transform="translate(-2.400 0.600) scale(.94)"><rect x="4.8" y="2.6" width="38.8" height="41" rx="5" fill="#d5d7da" stroke="#d0d2d4" stroke-width="1.6"/><rect x="10.6" y="4.4" width="27.4" height="17.4" rx="1.5" fill="#f1f1f1" stroke="#8a8a8a" stroke-opacity="0" stroke-width="1"/><path d="M13.4 9.2H35.2M13.4 13.2H35.2M13.4 17.2H35.2" stroke="#dcdcdc" stroke-width="1.8"/><rect x="12.4" y="29" width="24" height="14.4" rx="1.2" fill="#ededed" stroke="#7d8792" stroke-opacity="0" stroke-width="1.2"/><rect x="15.4" y="32.2" width="5.8" height="7.6" fill="#d6d8db"/></g><g opacity="1"><path d="M27.5 48.0L35.6 42.3L28.2 38.1Z" fill="#efefef" stroke="#d2d2d2" stroke-width="1" stroke-linejoin="round"/><path d="M27.5 48.0L30.6 45.8L27.8 44.3Z" fill="#d0d0d0"/><path d="M35.6 42.3L46.3 23.4L38.9 19.2L28.2 38.1Z" fill="#dcd3d0" stroke="#d2d2d2" stroke-width="1.200" stroke-linejoin="round"/><path d="M32.5 40.5L43.2 21.6L41.0 20.4L30.2 39.3Z" fill="#e8e0de"/><path d="M46.3 23.4L48.2 20.1L40.8 15.9L38.9 19.2Z" fill="#f4f4f4" stroke="#d2d2d2" stroke-width="1" stroke-linejoin="round"/></g></svg>
<svg style="left:675.0px;top:91.0px;width:48px;height:48px;" viewBox="0 0 48 48"><circle cx="20.9" cy="8.9" r="5" fill="#dde1dc" stroke="#cdcdcd" stroke-width="1.600"/><circle cx="38.9" cy="12.9" r="5" fill="#dde1dc" stroke="#cdcdcd" stroke-width="1.600"/><circle cx="6.9" cy="24.9" r="5" fill="#dde1dc" stroke="#cdcdcd" stroke-width="1.600"/><rect x="25.2" y="27.1" width="21.8" height="21.8" rx="4.5" fill="#c9c6bb"/><rect x="26.7" y="28.6" width="18.8" height="9" rx="3" fill="#d9d7cf" opacity=".8"/><line x1="36.1" y1="29.8" x2="36.1" y2="46.2" stroke="#fff" stroke-width="2.6"/><line x1="43.2" y1="33.9" x2="29.0" y2="42.1" stroke="#fff" stroke-width="2.6"/><line x1="43.2" y1="42.1" x2="29.0" y2="33.9" stroke="#fff" stroke-width="2.6"/><circle cx="36.1" cy="38.0" r="4.6" fill="#fff"/><circle cx="36.1" cy="38.0" r="2" fill="#c9c6bb"/></svg>
<svg style="left:741.0px;top:91.0px;width:48px;height:48px;" viewBox="0 0 48 48"><path d="M20.600 12.900H40.400M11.500 18.500L4.900 43.300" stroke="#c9c9c9" stroke-width="1.600"/><rect x="9.400" y="7.300" width="11.200" height="11.200" fill="#f1f1f1" stroke="#c3c3c3" stroke-width="2"/><path d="M10.500 8.400L19.500 17.400M19.500 8.400L10.500 17.400" stroke="#c3c3c3" stroke-width="1.600"/><path d="M43 21L28 37" stroke="#d9d9d9" stroke-width="2.600" stroke-linecap="round"/><path d="M29 35.500L21 45" stroke="#dad8cc" stroke-width="6" stroke-linecap="round"/><path d="M27 30L42 44" stroke="#d3d0c3" stroke-width="6.400"/><path d="M19 29C20 23 26 20 33 21L32 25C29 24 27 25 26 27L30 31L25 35Z" fill="#e3e3e3" stroke="#d3d3d3" stroke-width="1"/></svg>
<svg style="left:831.0px;top:91.0px;width:48px;height:48px;" viewBox="0 0 48 48"><rect x="3.800" y="6.3" width="38.600" height="10" fill="#e5e2d8" stroke="#d7d4c8" stroke-width="1.600"/><rect x="3.800" y="20.4" width="38.600" height="10" fill="#e5e2d8" stroke="#d7d4c8" stroke-width="1.600"/><rect x="3.800" y="34.4" width="38.600" height="10" fill="#e5e2d8" stroke="#d7d4c8" stroke-width="1.600"/><g opacity="1"><path d="M15.5 47.0L24.9 40.1L16.1 35.4Z" fill="#eeeeee" stroke="#cfcfcf" stroke-width="1" stroke-linejoin="round"/><path d="M15.5 47.0L19.1 44.4L15.7 42.6Z" fill="#c8c8c8"/><path d="M24.9 40.1L41.6 9.3L32.8 4.6L16.1 35.4Z" fill="#d9cfcc" stroke="#cfcfcf" stroke-width="1.200" stroke-linejoin="round"/><path d="M21.2 38.1L37.9 7.3L35.2 5.9L18.5 36.7Z" fill="#ece6e4"/><path d="M41.6 9.3L43.4 6.0L34.6 1.2L32.8 4.6Z" fill="#f6f6f6" stroke="#cfcfcf" stroke-width="1" stroke-linejoin="round"/></g></svg>
<svg style="left:894.0px;top:91.0px;width:48px;height:48px;" viewBox="0 0 48 48"><rect x="6" y="5.500" width="27" height="27" fill="#e4e1d6" stroke="#d8d5c9" stroke-width="1.400"/><path d="M10.500 11H41.800" stroke="#cfbcc0" stroke-width="3.400" stroke-linecap="round"/><path d="M19 9.500C20 6.500 30 6.500 31 9.500" fill="none" stroke="#cfbcc0" stroke-width="2"/><path d="M11 17.500H41.400L39.600 46H12.600Z" fill="#ebe4e4" stroke="#cfbcc0" stroke-width="3" stroke-linejoin="round"/><path d="M21 19V45M31.200 19V45" stroke="#cfbcc0" stroke-width="2.600"/><path d="M12 41.500H40" stroke="#cfbcc0" stroke-width="4"/></svg>
<svg style="left:962.0px;top:91.0px;width:48px;height:48px;" viewBox="0 0 48 48"><path d="M5 10C15 15 27 22 35 27L33.500 30C24 24 13 16 5 10Z" fill="#ededed" stroke="#d4d4d4" stroke-width="1.200" stroke-linejoin="round"/><path d="M2 25.500C14 24 26 23 34 21L34.500 24.500C24 27 10 29.500 5 29C3 28.500 2 27 2 25.500Z" fill="#ededed" stroke="#d4d4d4" stroke-width="1.200" stroke-linejoin="round"/><ellipse cx="39.500" cy="17" rx="6.500" ry="4.200" transform="rotate(-28 39.500 17)" fill="none" stroke="#cfbcbc" stroke-width="2.600"/><ellipse cx="38.500" cy="33.500" rx="6.500" ry="4.200" transform="rotate(38 38.500 33.500)" fill="none" stroke="#cfbcbc" stroke-width="2.600"/></svg>
<svg style="left:1028.0px;top:91.0px;width:48px;height:48px;" viewBox="0 0 48 48"><path d="M18 5.5H34.0L40.5 12.0V35.5H18Z" fill="#f5f5f5" stroke="#dedede" stroke-width="2"/><path d="M34.0 5.5V12.0H40.5" fill="none" stroke="#dedede" stroke-width="1.600"/><path d="M21.5 16.0H37.0" stroke="#e4e4e4" stroke-width="1.800"/><path d="M21.5 20.0H33.5" stroke="#e4e4e4" stroke-width="1.800"/><path d="M21.5 24.0H37.0" stroke="#e4e4e4" stroke-width="1.800"/><path d="M21.5 28.0H33.5" stroke="#e4e4e4" stroke-width="1.800"/><path d="M21.5 32.0H37.0" stroke="#e4e4e4" stroke-width="1.800"/><path d="M10 13.5H26.0L32.5 20.0V44.0H10Z" fill="#f6f6f6" stroke="#c4c4c4" stroke-width="2"/><path d="M26.0 13.5V20.0H32.5" fill="none" stroke="#c4c4c4" stroke-width="1.600"/><path d="M13.5 24.0H29.0" stroke="#d2d2d2" stroke-width="1.800"/><path d="M13.5 28.0H25.5" stroke="#d2d2d2" stroke-width="1.800"/><path d="M13.5 32.0H29.0" stroke="#d2d2d2" stroke-width="1.800"/><path d="M13.5 36.0H25.5" stroke="#d2d2d2" stroke-width="1.800"/><path d="M13.5 40.0H29.0" stroke="#d2d2d2" stroke-width="1.800"/></svg>
<svg style="left:1095.5px;top:91.0px;width:48px;height:48px;" viewBox="0 0 48 48"><rect x="7" y="5.500" width="31" height="38.500" fill="#eeece6" stroke="#d3cfc6" stroke-width="2"/><rect x="14.500" y="3.500" width="17" height="7.500" fill="#ececec" stroke="#d0d0d0" stroke-width="1.600"/><path d="M11.5 11.5H27.0L33.5 18.0V41.0H11.5Z" fill="#f6f6f6" stroke="#c4c4c4" stroke-width="2"/><path d="M27.0 11.5V18.0H33.5" fill="none" stroke="#c4c4c4" stroke-width="1.600"/><path d="M15.0 22.0H30.0" stroke="#d2d2d2" stroke-width="1.800"/><path d="M15.0 26.0H26.5" stroke="#d2d2d2" stroke-width="1.800"/><path d="M15.0 30.0H30.0" stroke="#d2d2d2" stroke-width="1.800"/><path d="M15.0 34.0H26.5" stroke="#d2d2d2" stroke-width="1.800"/></svg>
<svg style="left:1163.5px;top:91.0px;width:48px;height:48px;" viewBox="0 0 48 48"><path d="M15 7.500V16H25C38 16 40 33 28 41.500H20V36.500H25C32 33 31 25.500 24 25.500H15V34.500L1.500 21Z" fill="#ddd5d2" stroke="#d6cecb" stroke-width="1.400" stroke-linejoin="round"/></svg>
<svg style="left:1223.0px;top:91.0px;width:48px;height:48px;" viewBox="0 0 48 48"><path d="M33 7.500V16H23C10 16 8 33 20 41.500H28V36.500H23C16 33 17 25.500 24 25.500H33V34.500L46.500 21Z" fill="#d6dad7" stroke="#cfd3d0" stroke-width="1.400" stroke-linejoin="round"/></svg>
<svg style="left:1321.0px;top:91.0px;width:48px;height:48px;" viewBox="0 0 48 48"><defs><linearGradient id="lbg" x1="0" y1="0" x2="1" y2="1"><stop offset="0" stop-color="#fff27a"/><stop offset="1" stop-color="#ffe400"/></linearGradient></defs><path d="M3.1 20.15L11.5 10H44.9V30.3H11.5Z" fill="url(#lbg)" stroke="#c9a000" stroke-width="2" stroke-linejoin="miter"/><text x="11.8" y="24.8" font-family="Liberation Sans" font-weight="bold" font-size="18.500" textLength="27.6" lengthAdjust="spacingAndGlyphs" fill="#1e2a44">abc</text></svg>
<svg style="left:1386.0px;top:91.0px;width:48px;height:48px;" viewBox="0 0 48 48"><path d="M21.8 18.7L10.5 12.2A13 13 0 0 1 33.1 12.2Z" fill="#ffd800" stroke="#ff9900" stroke-width="1.800" stroke-linejoin="round"/><path d="M21.8 18.7L33.1 12.2A13 13 0 0 1 21.8 31.7Z" fill="#cc0000" stroke="#800000" stroke-width="1.800" stroke-linejoin="round"/><path d="M21.8 18.7L21.8 31.7A13 13 0 0 1 10.5 12.2Z" fill="#00b84a" stroke="#00602a" stroke-width="1.800" stroke-linejoin="round"/><rect x="25.800" y="33.600" width="5.600" height="12.600" fill="#ffd800" stroke="#ff9900" stroke-width="1.600"/><rect x="33.300" y="21.800" width="6" height="24.400" fill="#00b84a" stroke="#00602a" stroke-width="1.600"/><rect x="41.400" y="35.800" width="5.800" height="10.400" fill="#cc0000" stroke="#800000" stroke-width="1.600"/></svg>
<svg style="left:1467.0px;top:91.0px;width:48px;height:48px;" viewBox="0 0 48 48"><defs><linearGradient id="lpg" x1="0" y1="0" x2="1" y2="1"><stop offset="0" stop-color="#eef6ff"/><stop offset="1" stop-color="#9cc6f3"/></linearGradient></defs><path d="M3.2 20.1L11.600000000000001 10H45V30.2H11.600000000000001Z" fill="url(#lpg)" stroke="#2f8ff2" stroke-width="2" stroke-linejoin="miter"/><text x="11.900000000000002" y="24.7" font-family="Liberation Sans" font-weight="bold" font-size="18.500" textLength="18.8" lengthAdjust="spacingAndGlyphs" fill="#1f2933">ab</text><path d="M37.199999999999996 20.9L39.8 33.4" stroke="#777" stroke-width="5" stroke-linecap="round"/><path d="M37.199999999999996 20.9L39.8 33.4" stroke="#f4f4f4" stroke-width="3.200" stroke-linecap="round"/><circle cx="40.8" cy="36.4" r="9.300" fill="#a8121f"/><circle cx="38.3" cy="32.9" r="3" fill="#e8606a"/></svg>
<svg style="left:1533.0px;top:91.0px;width:48px;height:48px;" viewBox="0 0 48 48"><defs><linearGradient id="lrg" x1="0" y1="0" x2="1" y2="1"><stop offset="0" stop-color="#ffffff"/><stop offset="1" stop-color="#ffb8b8"/></linearGradient></defs><path d="M3.2 20.2L11.600000000000001 10.2H45V30.2H11.600000000000001Z" fill="url(#lrg)" stroke="#ff0000" stroke-width="2.6" stroke-linejoin="miter"/><text x="11.900000000000002" y="24.7" font-family="Liberation Sans" font-weight="bold" font-size="18.500" textLength="27.6" lengthAdjust="spacingAndGlyphs" fill="#ff0000">abc</text></svg>
<svg style="left:1613.0px;top:91.0px;width:48px;height:48px;" viewBox="0 0 48 48"><path d="M3.2 20.15L11.600000000000001 10H45.0V30.3H11.600000000000001Z" fill="#e7e5dc" stroke="#dbd8cc" stroke-width="2" stroke-linejoin="miter"/><text x="11.900000000000002" y="24.8" font-family="Liberation Sans" font-weight="bold" font-size="18.500" textLength="18.8" lengthAdjust="spacingAndGlyphs" fill="#c0c2c6">ab</text><path d="M37.1 20.9L39.7 33.4" stroke="#d5d5d5" stroke-width="5" stroke-linecap="round"/><path d="M37.1 20.9L39.7 33.4" stroke="#f0f0f0" stroke-width="3.200" stroke-linecap="round"/><circle cx="40.7" cy="36.4" r="9.300" fill="#d5cdcf"/><circle cx="38.2" cy="32.9" r="3" fill="#e3dddf"/></svg>
<svg style="left:1679.0px;top:91.0px;width:48px;height:48px;" viewBox="0 0 48 48"><path d="M3.2 20.15L11.600000000000001 10H45.0V30.3H11.600000000000001Z" fill="#e7e5dc" stroke="#dbd8cc" stroke-width="2" stroke-linejoin="miter"/><text x="11.900000000000002" y="24.8" font-family="Liberation Sans" font-weight="bold" font-size="18.500" textLength="27.6" lengthAdjust="spacingAndGlyphs" fill="#c0c2c6">abc</text><path d="M19.500 40C26.500 31 40.500 30 49.500 40C40.500 49 27.500 49 19.500 40Z" fill="#f3f3f3" stroke="#cfcfcf" stroke-width="1.400"/><circle cx="34.500" cy="39.500" r="6" fill="#dfe5ea"/><circle cx="34.500" cy="39.500" r="2.600" fill="#c4c4c4"/><path d="M17.500 35C27.500 27 43.500 27 51.500 34" fill="none" stroke="#d4d4d4" stroke-width="1.200"/></svg>
<svg style="left:1748.0px;top:91.0px;width:48px;height:48px;" viewBox="0 0 48 48"><path d="M0.2 20.15L8.6 10H42.0V30.3H8.6Z" fill="#e7e5dc" stroke="#dbd8cc" stroke-width="2" stroke-linejoin="miter"/><text x="8.9" y="24.8" font-family="Liberation Sans" font-weight="bold" font-size="18.500" textLength="27.6" lengthAdjust="spacingAndGlyphs" fill="#c0c2c6">abc</text><rect x="26" y="27.1" width="21.800" height="21.800" rx="4" fill="#c9cbcd"/><rect x="27.5" y="28.6" width="18.800" height="9" rx="3" fill="#fff" opacity=".18"/><path d="M28.500 34.500H36.500V30L45.500 38L36.500 46V41.500H28.500Z" fill="#f3f3f3"/></svg>
<svg style="left:1814.0px;top:91.0px;width:48px;height:48px;" viewBox="0 0 48 48"><path d="M0.2 20.15L8.6 10H42.0V30.3H8.6Z" fill="#e7e5dc" stroke="#dbd8cc" stroke-width="2" stroke-linejoin="miter"/><text x="8.9" y="24.8" font-family="Liberation Sans" font-weight="bold" font-size="18.500" textLength="27.6" lengthAdjust="spacingAndGlyphs" fill="#c0c2c6">abc</text><rect x="26" y="27.1" width="21.800" height="21.800" rx="4" fill="#c9cbcd"/><rect x="27.5" y="28.6" width="18.800" height="9" rx="3" fill="#fff" opacity=".18"/><path d="M31.500 40.500A6.500 6.500 0 1 1 41 43" fill="none" stroke="#f3f3f3" stroke-width="3.200"/><path d="M36 46.500L43.500 45.500L40.500 38.500Z" fill="#f3f3f3"/></svg>
<svg style="left:1880.0px;top:91.0px;width:48px;height:48px;" viewBox="0 0 48 48"><path d="M0.2 20.15L8.6 10H42.0V30.3H8.6Z" fill="#e7e5dc" stroke="#dbd8cc" stroke-width="2" stroke-linejoin="miter"/><text x="8.9" y="24.8" font-family="Liberation Sans" font-weight="bold" font-size="18.500" textLength="27.6" lengthAdjust="spacingAndGlyphs" fill="#c0c2c6">abc</text><rect x="26" y="27.1" width="21.800" height="21.800" rx="4" fill="#d3d0c4"/><rect x="27.5" y="28.6" width="18.800" height="9" rx="3" fill="#fff" opacity=".18"/><path d="M30 45.500L32 39.500L42.500 29.500L46 33L35.500 43.500Z" fill="#f6f6f4"/><path d="M29.500 46.500L36 42" stroke="#f6f6f4" stroke-width="2"/></svg>
<svg style="left:1978.0px;top:91.0px;width:48px;height:48px;" viewBox="0 0 48 48"><defs><radialGradient id="msg" cx=".4" cy=".35" r=".7"><stop offset="0" stop-color="#b9d6f0"/><stop offset="1" stop-color="#6c9fd0"/></radialGradient></defs><circle cx="24" cy="22.200" r="22.800" fill="url(#msg)" stroke="#1f4e7c" stroke-width="2.400"/><path d="M8 12c4-4 9-5 12-3l-3 4-4 1 1 4-4 3-4-2zM26 6l8 1 6 5 3 8-3 6-5-2-1-6-5-3-4 1zM12 25l6 2 2 6-3 7-5-5zM30 28l6 1 1 6-5 5-3-6z" fill="#2b5a8c" opacity=".95"/><path d="M1.500 22.200H46.500M4 11.500H44M4 33H44M24 -0.500V45M24 -0.500C12 8 12 36 24 45M24 -0.500C36 8 36 36 24 45" fill="none" stroke="#eef5fb" stroke-width="1.300" opacity=".9"/><g transform="translate(-1.500 -1.300) scale(1.2 1.03)"><path d="M17.500 27.500L8.500 40C5 45.500 10 48.800 16 48.500C21 48 23.500 45 23 41L24 38L25 41C24.500 45 27 48 32 48.500C38 48.800 43 45.500 39.500 40L30.500 27.500L26.500 27.200L25.500 30.500H22.500L21.500 27.200Z" fill="#050505"/><ellipse cx="15.800" cy="43.400" rx="4.200" ry="2.400" fill="#fff"/><ellipse cx="32.200" cy="43.400" rx="4.200" ry="2.400" fill="#fff"/></g></svg>
<svg style="left:2076.5px;top:91.0px;width:48px;height:48px;" viewBox="0 0 48 48"><defs><linearGradient id="pyb" x1="0" y1="0" x2="1" y2="1"><stop offset="0" stop-color="#3a8ed0"/><stop offset="1" stop-color="#1f68a8"/></linearGradient><linearGradient id="pyy" x1="0" y1="0" x2="1" y2="1"><stop offset="0" stop-color="#ffde4a"/><stop offset="1" stop-color="#ffc311"/></linearGradient></defs><g transform="translate(-0.260 0) scale(.864 1)"><path d="M23.500 4.800C17 4.800 15.500 7.600 15.500 10.500V15H24V16.500H11C6.500 16.500 4 20 4 25.500C4 31 6.500 34.500 11 34.500H14.500V29.500C14.500 25.500 17.500 23.500 20.500 23.500H28C31 23.500 33 21.500 33 18.500V10.500C33 7.600 30 4.800 23.500 4.800Z" fill="url(#pyb)"/><circle cx="19.500" cy="9.700" r="1.700" fill="#fff"/><path d="M26.500 46.200C33 46.200 34.500 43.400 34.500 40.500V36H26V34.500H39C43.500 34.500 46 31 46 25.500C46 20 43.500 16.500 39 16.500H35.500V21.500C35.500 25.500 32.500 27.500 29.500 27.500H22C19 27.500 17 29.500 17 32.500V40.500C17 43.400 20 46.200 26.500 46.200Z" fill="url(#pyy)"/><circle cx="30.500" cy="41.300" r="1.700" fill="#fff"/></g><path d="M33.800 35.200L45 40.700L33.800 46.200" fill="none" stroke="#454545" stroke-width="2.400"/></svg>
<svg style="left:2141.5px;top:91.0px;width:48px;height:48px;" viewBox="0 0 48 48"><defs><linearGradient id="plf" x1="0" y1="0" x2="0" y2="1"><stop offset="0" stop-color="#f5c06a"/><stop offset="1" stop-color="#c77f14"/></linearGradient><linearGradient id="plg" x1="0" y1="0" x2="0" y2="1"><stop offset="0" stop-color="#8ee04a"/><stop offset="1" stop-color="#3fae1e"/></linearGradient></defs><path d="M2.500 43.500V5.500H21L24 9.500H45V43.500Z" fill="#d9d9d9" stroke="#8a8a8a" stroke-width="1.400"/><path d="M5 9H19" stroke="#f4f4f4" stroke-width="3"/><path d="M30 12H44V20H30Z" fill="#fafafa" stroke="#aaa" stroke-width="1"/><path d="M6.500 19.500H48.500L46 43.500H4.500Z" fill="url(#plf)" stroke="#8a5a10" stroke-width="1.400" stroke-linejoin="round"/><path d="M5.500 31H47.300" stroke="#fbe2b0" stroke-width="1.200" opacity=".8"/><path d="M20 14C24 7.500 36 6.500 40.500 14.500V22H47.500L36 35L24.500 22H31.500V17C29 13 24 12.500 20 14Z" fill="url(#plg)" stroke="#2f9a14" stroke-width="1.400" stroke-linejoin="round"/></svg>
<svg style="left:2240.0px;top:91.0px;width:48px;height:48px;" viewBox="0 0 48 48"><rect x="3.800" y="3.200" width="40.400" height="42.400" fill="#6698cc" stroke="#0d0d0d" stroke-width="2"/><rect x="4.800" y="4.200" width="9.600" height="40.400" fill="#2b4257"/><path d="M14.400 4V45" stroke="#0d0d0d" stroke-width="1.400"/><text x="29.500" y="35.500" text-anchor="middle" font-family="Liberation Serif" font-size="32" fill="#fff">?</text></svg>
<svg style="left:516.2px;top:135.2px;width:11.6px;height:5.6px" viewBox="0 0 11.6 5.6"><path d="M0 0H11.6L5.8 5.6Z" fill="#555"/></svg>
<svg style="left:799.8px;top:112.4px;width:16px;height:8.6px" viewBox="0 0 16 8.6"><path d="M0 0H16L8.0 8.6Z" fill="#444"/></svg>
<div style="left:361.5px;top:97px;width:1.6px;height:38px;background:#c9c9c9"></div>
<div style="left:363.1px;top:97px;width:1.6px;height:38px;background:#fbfbfb"></div>
<div style="left:1453.5px;top:97px;width:1.6px;height:38px;background:#c9c9c9"></div>
<div style="left:1455.1px;top:97px;width:1.6px;height:38px;background:#fbfbfb"></div>
<div style="left:1600px;top:97px;width:1.6px;height:38px;background:#c9c9c9"></div>
<div style="left:1601.6px;top:97px;width:1.6px;height:38px;background:#fbfbfb"></div>
<span class="t" style="left:8.0px;top:160px;line-height:31px;font-size:22.5px;color:#1c1c1c;letter-spacing:0.03px;">Layers</span>
<svg style="left:714.0px;top:164.0px;width:22px;height:22px;" viewBox="0 0 22 22"><rect x="1" y="1" width="20" height="20" rx="3.500" fill="none" stroke="#6b6965" stroke-width="2"/><path d="M9 8V5h8v8h-3" fill="none" stroke="#6b6965" stroke-width="2"/><rect x="5" y="9" width="8" height="8" fill="none" stroke="#6b6965" stroke-width="2"/></svg>
<svg style="left:742.0px;top:164.0px;width:22px;height:22px;" viewBox="0 0 22 22"><rect x="1" y="1" width="20" height="20" rx="3.500" fill="none" stroke="#6b6965" stroke-width="2"/><path d="M5.500 5.500l11 11M16.500 5.500l-11 11" stroke="#6b6965" stroke-width="3.800"/></svg>
<svg style="left:16.0px;top:208.0px;width:32px;height:32px;" viewBox="0 0 32 32"><defs><linearGradient id="bry" x1="0" x2="1"><stop offset="0" stop-color="#fff7a0"/><stop offset=".6" stop-color="#ffee00"/></linearGradient><linearGradient id="brb" x1="0" x2="1"><stop offset="0" stop-color="#a9cdf0"/><stop offset=".7" stop-color="#5b8fd0"/></linearGradient><linearGradient id="brr" x1="0" x2="1"><stop offset="0" stop-color="#ff8a8a"/><stop offset=".5" stop-color="#ff1010"/></linearGradient></defs><path d="M7.1 5.9L22.0 11.5L20.4 16.9L5.0 10.7Z" fill="url(#bry)"/><path d="M5.0 10.7L20.4 16.9L18.7 22.3L3.0 15.6Z" fill="url(#brb)"/><path d="M3.0 15.6L18.7 22.3L17.1 27.7L0.9 20.4Z" fill="url(#brr)"/><path d="M21 15.800L29.600 6.200" stroke="#b5701a" stroke-width="3.800" stroke-linecap="round"/><path d="M21 15.800L29.600 6.200" stroke="#e9a23c" stroke-width="2.200" stroke-linecap="round"/><path d="M15.100 12.800L24 20.100L17.100 28L8.800 19.800Z" fill="#e6b566" stroke="#b37a2a" stroke-width="1" stroke-linejoin="round"/><path d="M15.100 12.800L24 20.100L22.600 21.700L13.600 14.300Z" fill="#d8922a"/><path d="M11 21.500L16.500 15.500M13.200 23.700L18.800 17.500M15.300 25.800L21 19.500M10.500 18L19 26M12.300 16L20.700 24" stroke="#c99445" stroke-width=".7"/></svg>
<svg style="left:66.0px;top:208.0px;width:32px;height:32px;" viewBox="0 0 32 32"><path d="M2.500 19.100V29.300H14.700" fill="none" stroke="#808078" stroke-width="2"/><rect x="11.400" y="5.200" width="15.200" height="14.800" fill="#ececec" stroke="#808078" stroke-width="2"/><rect x="7.400" y="9.500" width="15.200" height="14.900" fill="#ececec" stroke="#808078" stroke-width="2"/><path d="M14.400 4.600V3.700A2.600 2.600 0 0 1 19.600 3.700V19.200A2.600 2.600 0 0 1 14.400 19.200V12" fill="none" stroke="#2f5f8f" stroke-width="1.900" stroke-linecap="round"/><rect x="18" y="19.800" width="12" height="12.200" rx="2.800" fill="#4c9a5e"/><rect x="19" y="20.800" width="10" height="5" rx="2" fill="#7ab888" opacity=".6"/><path d="M24 22.200V29.600M20.300 25.900H27.700" stroke="#fff" stroke-width="2.800" stroke-linecap="round"/></svg>
<svg style="left:116.0px;top:208.0px;width:32px;height:32px;" viewBox="0 0 32 32"><defs><radialGradient id="eyg" cx=".5" cy=".6" r=".6"><stop offset="0" stop-color="#9cc4ee"/><stop offset="1" stop-color="#4f84c4"/></radialGradient></defs><path d="M1.400 17.400C5.500 11 11.500 9.300 16.500 9.500C23.500 9.800 27.500 15.500 31.800 19.400C27 22.500 23 26 16 26C8.500 26 3.500 21.500 1.400 17.400Z" fill="#f2f2ee" stroke="#80807a" stroke-width="1.300" stroke-linejoin="round"/><path d="M1.400 9.800C8 6.500 15 6 20.500 6.300C25 6.500 28 8.500 29.800 10.900" fill="none" stroke="#80807a" stroke-width="1.200" stroke-linecap="round"/><circle cx="15.600" cy="16.400" r="7.600" fill="url(#eyg)" stroke="#3f6fa8" stroke-width=".8"/><circle cx="15.900" cy="15.800" r="3.100" fill="#07090c"/><circle cx="14.700" cy="14.300" r="1.100" fill="#fff"/><path d="M24.200 27H35.800L30 33Z" fill="#555"/></svg>
<svg style="left:166.0px;top:208.0px;width:32px;height:32px;" viewBox="0 0 32 32"><path d="M3 6.500H29L19.500 18.500V31.500L13 27.500V18.500Z" fill="#6a9bd1" stroke="#2f5f8f" stroke-width="1.600" stroke-linejoin="round"/><rect x="2.400" y="1.200" width="27.200" height="5.400" fill="#ffe21f" stroke="#2f5f8f" stroke-width="1.400"/><path d="M15 9V26" stroke="#a9c9ea" stroke-width="1.600"/></svg>
<svg style="left:217.0px;top:208.0px;width:32px;height:32px;" viewBox="0 0 32 32"><text x="1" y="20.500" font-family="Liberation Serif" font-size="40" fill="#6b2a7a">ε</text><defs><linearGradient id="epg" x1="0" y1="0" x2="0" y2="1"><stop offset="0" stop-color="#b4b4ae"/><stop offset="1" stop-color="#8e8e88"/></linearGradient></defs><rect x="16.200" y="17" width="15" height="14.800" rx="2.600" fill="url(#epg)"/><path d="M17.800 18.600H29.600L25.600 24.200V31.800H21.800V24.200Z" fill="#f1f1ef"/></svg>
<svg style="left:291.0px;top:208.0px;width:32px;height:32px;" viewBox="0 0 32 32"><path d="M1.500 4.500H29M3 4.500V28M3 13H9M3 25H9" fill="none" stroke="#8a8a8a" stroke-width="1.500"/><rect x="9.200" y="10" width="6" height="6" fill="#ffb300" stroke="#ff7a00" stroke-width="1.400"/><rect x="9.200" y="22" width="6" height="6" fill="#ffb300" stroke="#ff7a00" stroke-width="1.400"/><path d="M18.200 2H24.200V19H30.600L21.200 29.600L11.800 19H18.200Z" fill="#5b8cc9" stroke="#2f5f8f" stroke-width="1.400" stroke-linejoin="round"/></svg>
<svg style="left:341.0px;top:208.0px;width:32px;height:32px;" viewBox="0 0 32 32"><path d="M1.500 4.500H29M3 4.500V28M3 13H9M3 25H9" fill="none" stroke="#8a8a8a" stroke-width="1.500"/><rect x="9.200" y="10" width="6" height="6" fill="#ffb300" stroke="#ff7a00" stroke-width="1.400"/><rect x="9.200" y="22" width="6" height="6" fill="#ffb300" stroke="#ff7a00" stroke-width="1.400"/><path d="M18.200 28.500H24.200V11.500H30.600L21.200 1L11.800 11.500H18.200Z" fill="#5b8cc9" stroke="#2f5f8f" stroke-width="1.400" stroke-linejoin="round"/></svg>
<svg style="left:390.5px;top:208.0px;width:32px;height:32px;" viewBox="0 0 32 32"><rect x="2.800" y="3.200" width="20.400" height="20.400" fill="#ececec" stroke="#7b7b74" stroke-width="2"/><rect x="17.600" y="20" width="11.800" height="9.800" rx="2.600" fill="#fb3045"/><path d="M20.200 24.900H26.800" stroke="#fff" stroke-width="2.400" stroke-linecap="round"/></svg>
<svg style="left:260.0px;top:220.5px;width:16px;height:8px" viewBox="0 0 16 8"><path d="M0 0H16L8.0 8Z" fill="#505050"/></svg>
<div style="left:0px;top:256px;width:767px;height:1727px;background:#fff;border:1px solid #b8b8b8;box-sizing:border-box"></div>
<div style="left:2px;top:330px;width:764px;height:36px;background:#0062e6"></div>
<div style="left:126.5px;top:330px;width:639.5px;height:36px;background:#006dec"></div>
<div style="left:758px;top:260px;width:6px;height:32px;background:#e2e2e2"></div>
<div style="left:758px;top:296px;width:6px;height:32px;background:#e2e2e2"></div>
<div style="left:758px;top:332px;width:6px;height:32px;background:#e2e2e2"></div>
<div style="left:724px;top:332.5px;width:33px;height:33px;background:#f4f4f4;border-radius:5px"></div>
<div style="left:724px;top:260px;width:33px;height:33px;background:#fbfbfb;border:1px solid #d9d9d9;border-radius:5px;box-sizing:border-box"></div>
<svg style="left:728.5px;top:264.5px;width:24px;height:24px;" viewBox="0 0 24 24"><defs><linearGradient id="mcg" x1="0" y1="0" x2="0" y2="1"><stop offset="0" stop-color="#bdbdbd"/><stop offset=".3" stop-color="#f7f7f7"/><stop offset="1" stop-color="#f9f9f9"/></linearGradient></defs><path d="M3.6 0.600V5M3.6 18.500V22.300" stroke="#6a6a6a" stroke-width="1.900" stroke-linecap="round"/><path d="M8.8 0.600V5M8.8 18.500V22.300" stroke="#6a6a6a" stroke-width="1.900" stroke-linecap="round"/><path d="M14.1 0.600V5M14.1 18.500V22.300" stroke="#6a6a6a" stroke-width="1.900" stroke-linecap="round"/><path d="M19.4 0.600V5M19.4 18.500V22.300" stroke="#6a6a6a" stroke-width="1.900" stroke-linecap="round"/><rect x="0.400" y="5" width="22.600" height="13.400" rx="2.600" fill="url(#mcg)" stroke="#6a6a6a" stroke-width="2"/></svg>
<div style="left:48.3px;top:262.3px;width:27.6px;height:27.4px;background:#fff;border:2px solid #bdbdbd;border-radius:3px;box-sizing:border-box"></div>
<div style="left:48.3px;top:298.3px;width:27.6px;height:27.4px;background:#fff;border:2px solid #bdbdbd;border-radius:3px;box-sizing:border-box"></div>
<div style="left:48.3px;top:334.3px;width:27.6px;height:27.4px;background:#fff;border:2px solid #c9c9c9;border-radius:3px;box-sizing:border-box"></div>
<svg style="left:48.5px;top:334.5px;width:27px;height:27px" viewBox="0 0 27 27"><path d="M6.5 13.5L11.5 20.5L20.5 6" fill="none" stroke="#1e1e1e" stroke-width="3.2" stroke-linejoin="miter"/></svg>
<div style="left:48.3px;top:370.3px;width:27.6px;height:27.4px;background:#fff;border:2px solid #bdbdbd;border-radius:3px;box-sizing:border-box"></div>
<div style="left:48.3px;top:406.3px;width:27.6px;height:27.4px;background:#fff;border:2px solid #bdbdbd;border-radius:3px;box-sizing:border-box"></div>
<div style="left:88px;top:260px;width:32px;height:32px;background:#77bb6b;border:2px solid #4f8747;box-sizing:border-box"></div>
<div style="left:88px;top:368px;width:32px;height:32px;background:#7b8c91;border:2px solid #525f64;box-sizing:border-box"></div>
<div style="left:88px;top:404px;width:32px;height:32px;background:#c3b596;border:2px solid #857659;box-sizing:border-box"></div>
<svg style="left:92px;top:300px;width:26px;height:26px" viewBox="0 0 26 26"><rect x="0.0" y="0.0" width="8.7" height="8.7" fill="#23394f"/><rect x="8.6" y="0.0" width="8.7" height="8.7" fill="#a9c8e9"/><rect x="17.2" y="0.0" width="8.7" height="8.7" fill="#23394f"/><rect x="0.0" y="8.6" width="8.7" height="8.7" fill="#a9c8e9"/><rect x="8.6" y="8.6" width="8.7" height="8.7" fill="#23394f"/><rect x="17.2" y="8.6" width="8.7" height="8.7" fill="#a9c8e9"/><rect x="0.0" y="17.2" width="8.7" height="8.7" fill="#23394f"/><rect x="8.6" y="17.2" width="8.7" height="8.7" fill="#a9c8e9"/></svg>
<svg style="left:14.0px;top:308.2px;width:16px;height:8px" viewBox="0 0 16 8"><path d="M0 0H16L8.0 8Z" fill="#555"/></svg>
<svg style="left:96px;top:340px;width:16px;height:16px" viewBox="0 0 16 16"><circle cx="8" cy="8.3" r="4" fill="#dcc55a" stroke="#6f7277" stroke-width="1.6"/></svg>
<span class="t" style="left:134.5px;top:258px;line-height:36px;font-size:27px;color:#808080;letter-spacing:-0.54px;font-weight:bold;font-style:italic;-webkit-text-stroke:0.45px #808080;">Dissolved</span>
<span class="t" style="left:134.5px;top:294px;line-height:36px;font-size:27px;color:#808080;letter-spacing:0.23px;font-weight:bold;font-style:italic;-webkit-text-stroke:0.45px #808080;">OpenStreetMap</span>
<span class="t" style="left:132.7px;top:330px;line-height:36px;font-size:27px;color:#fff;letter-spacing:-0.28px;font-weight:bold;text-decoration:underline;text-decoration-thickness:2.2px;text-underline-offset:4px;">Centroids</span>
<span class="t" style="left:134.5px;top:366px;line-height:36px;font-size:27px;color:#808080;letter-spacing:-0.14px;font-weight:bold;font-style:italic;-webkit-text-stroke:0.45px #808080;">Fixed geometries</span>
<span class="t" style="left:134.5px;top:402px;line-height:36px;font-size:27px;color:#808080;letter-spacing:0.17px;font-weight:bold;font-style:italic;-webkit-text-stroke:0.45px #808080;">india-village-census</span>
<div style="left:129px;top:1985px;width:638px;height:2px;background:#c2c2c2"></div>
<div style="left:129.5px;top:1986px;width:146.5px;height:47.3px;background:#dedede;border:1.5px solid #bcbcbc;border-top:none;border-radius:0 0 6px 6px;box-sizing:border-box"></div>
<div style="left:1.2px;top:1984px;width:127.8px;height:53px;background:linear-gradient(#efefef,#f5f5f5);border:1.5px solid #ababab;border-top:none;border-radius:0 0 6px 6px;box-sizing:border-box"></div>
<span class="t" style="left:25.4px;top:1995px;line-height:36px;font-size:27px;color:#222;letter-spacing:-0.64px;">Layers</span>
<span class="t" style="left:153.7px;top:1993px;line-height:36px;font-size:27px;color:#222;letter-spacing:-0.25px;">Browser</span>
<div style="left:780px;top:156px;width:2579px;height:1883px;background:#fff;border:1px solid #b4b4b4;box-sizing:border-box"></div>
<svg style="left:781px;top:157px;width:2577px;height:1881px" viewBox="0 0 2577 1881" fill="#e1b800" stroke="#2c2820" stroke-width="2"><circle cx="627.1" cy="149.4" r="5"/><circle cx="633.3" cy="263.2" r="5"/><circle cx="791.2" cy="279.4" r="5"/><circle cx="575.3" cy="348.2" r="5"/><circle cx="670.2" cy="355.0" r="5"/><circle cx="774.2" cy="408.1" r="5"/><circle cx="849.2" cy="418.3" r="5"/><circle cx="928.3" cy="415.2" r="5"/><circle cx="648.2" cy="422.3" r="5"/><circle cx="1097.0" cy="474.1" r="5"/><circle cx="989.1" cy="493.1" r="5"/><circle cx="620.3" cy="502.4" r="5"/><circle cx="708.1" cy="507.3" r="5"/><circle cx="894.2" cy="567.2" r="5"/><circle cx="1236.3" cy="569.1" r="5"/><circle cx="720.2" cy="606.3" r="5"/><circle cx="1072.2" cy="601.3" r="5"/><circle cx="628.1" cy="678.2" r="5"/><circle cx="735.1" cy="685.1" r="5"/><circle cx="857.0" cy="676.1" r="5"/><circle cx="994.4" cy="722.3" r="5"/><circle cx="1135.2" cy="746.2" r="5"/><circle cx="809.2" cy="775.3" r="5"/><circle cx="913.1" cy="777.2" r="5"/><circle cx="715.2" cy="805.1" r="5"/><circle cx="1039.4" cy="817.2" r="5"/><circle cx="919.0" cy="872.1" r="5"/><circle cx="996.2" cy="895.1" r="5"/><circle cx="1214.3" cy="908.1" r="5"/><circle cx="1072.2" cy="945.9" r="5"/><circle cx="1143.3" cy="957.1" r="5"/><circle cx="976.1" cy="1022.8" r="5"/><circle cx="1393.3" cy="655.3" r="5"/><circle cx="1479.2" cy="673.3" r="5"/><circle cx="1274.2" cy="704.0" r="5"/><circle cx="1578.1" cy="711.1" r="5"/><circle cx="1678.3" cy="756.1" r="5"/><circle cx="1811.1" cy="770.1" r="5"/><circle cx="1510.2" cy="800.1" r="5"/><circle cx="1370.3" cy="835.2" r="5"/><circle cx="1284.1" cy="856.0" r="5"/><circle cx="1893.3" cy="845.1" r="5"/><circle cx="1633.0" cy="856.0" r="5"/><circle cx="1710.3" cy="871.2" r="5"/><circle cx="1779.1" cy="892.9" r="5"/><circle cx="1504.0" cy="898.2" r="5"/><circle cx="1876.2" cy="944.1" r="5"/><circle cx="1640.2" cy="949.0" r="5"/><circle cx="1509.0" cy="983.2" r="5"/><circle cx="1349.2" cy="994.0" r="5"/><circle cx="1724.2" cy="1030.9" r="5"/><circle cx="1825.0" cy="1030.9" r="5"/><circle cx="1263.0" cy="1073.4" r="5"/><circle cx="1075.0" cy="1104.1" r="5"/><circle cx="885.2" cy="1153.1" r="5"/><circle cx="1213.0" cy="1165.2" r="5"/><circle cx="1035.9" cy="1191.3" r="5"/><circle cx="802.1" cy="1343.0" r="5"/><circle cx="1471.1" cy="1073.1" r="5"/><circle cx="1933.0" cy="1066.0" r="5"/><circle cx="1623.1" cy="1100.1" r="5"/><circle cx="1823.2" cy="1125.2" r="5"/><circle cx="1388.3" cy="1158.1" r="5"/><circle cx="1693.2" cy="1179.8" r="5"/><circle cx="1601.1" cy="1190.0" r="5"/><circle cx="1499.0" cy="1201.2" r="5"/><circle cx="1321.0" cy="1222.9" r="5"/><circle cx="1763.9" cy="1235.0" r="5"/><circle cx="1634.0" cy="1271.0" r="5"/><circle cx="1723.9" cy="1401.0" r="5"/></svg>
<div style="left:8.3px;top:2046.6px;width:426.7px;height:46.4px;background:#fff;border:1.5px solid #b7b7b7;border-radius:5px;box-sizing:border-box"></div>
<svg style="left:25px;top:2058px;width:26px;height:26px" viewBox="0 0 26 26" fill="none" stroke="#8e8e8e" stroke-width="2.4"><circle cx="10" cy="10" r="7.5"/><path d="M15.5 15.5L23 23" stroke-linecap="round"/></svg>
<span class="t" style="left:68.0px;top:2053px;line-height:36px;font-size:27px;color:#9d9d9d;letter-spacing:0.1px;">Type to locate (</span>
<svg style="left:254px;top:2062px;width:19px;height:19px" viewBox="0 0 19 19" fill="none" stroke="#9d9d9d" stroke-width="2"><path d="M6.5 6.5h6v6h-6zM6.5 6.5V4a2.5 2.5 0 1 0-2.5 2.5zM12.5 6.5H15A2.5 2.5 0 1 0 12.5 4zM12.5 12.5V15a2.5 2.5 0 1 0 2.5-2.5zM6.5 12.5H4A2.5 2.5 0 1 0 6.5 15z"/></svg>
<span class="t" style="left:275.5px;top:2053px;line-height:36px;font-size:27px;color:#9d9d9d;">K)</span>
<span class="t" style="left:452.8px;top:2054px;line-height:33px;font-size:24px;color:#1e1e1e;letter-spacing:-0.23px;">4 legend entries removed.</span>
<span class="t" style="left:1612.5px;top:2054px;line-height:33px;font-size:24px;color:#1e1e1e;letter-spacing:-0.39px;">Coordinate</span>
<div style="left:1734.3px;top:2048.4px;width:222.9px;height:42.8px;background:#fff;border:2px solid #b4b4b4;border-radius:6px;box-sizing:border-box;"></div>
<span class="t" style="left:1751.0px;top:2054px;line-height:33px;font-size:24px;color:#1e1e1e;letter-spacing:-0.08px;">-104706,3346535</span>
<svg style="left:1964.5px;top:2053.5px;width:34px;height:34px;" viewBox="0 0 34 34"><g transform="rotate(-28 17 17)"><rect x="8.500" y="4" width="16.500" height="26" rx="8" fill="#fff" stroke="#0b0b0b" stroke-width="2.500"/><path d="M8.500 15H25M16.800 4V15" stroke="#0b0b0b" stroke-width="1.800"/><rect x="14.300" y="6.500" width="5" height="7.500" rx="2.500" fill="#0b0b0b"/><path d="M8.500 23C12 27 21 27 25 23" fill="none" stroke="#0b0b0b" stroke-width="1.600"/></g><circle cx="23" cy="27.500" r="2.300" fill="#fff" stroke="#0b0b0b" stroke-width="1.700"/><path d="M22 10.500L31.500 2.500M1.500 24.500L8 21.500" stroke="#0b0b0b" stroke-width="1.800" stroke-dasharray="2 2.600"/><path d="M27.500 31C31 28.500 32 24 30.500 20.500" fill="none" stroke="#c9b3b8" stroke-width="2.400"/></svg>
<span class="t" style="left:2025.7px;top:2054px;line-height:33px;font-size:24px;color:#1e1e1e;letter-spacing:-1.15px;">Scale</span>
<div style="left:2088.6px;top:2046.2px;width:187px;height:47.2px;background:#fff;border:2px solid #b4b4b4;border-radius:6px;box-sizing:border-box;background:linear-gradient(#fff,#f0f0f0);"></div>
<div style="left:2092px;top:2049.5px;width:142.5px;height:40.6px;background:#fff;border-right:1.5px solid #c4c4c4;box-sizing:border-box;border-radius:3px 0 0 3px"></div>
<span class="t" style="left:2096.3px;top:2054px;line-height:33px;font-size:24px;color:#1e1e1e;letter-spacing:-0.30px;">1:5595323</span>
<svg style="left:2244.9px;top:2066.3px;width:16px;height:8px" viewBox="0 0 16 8"><path d="M0 0H16L8.0 8Z" fill="#555"/></svg>
<svg style="left:2297.0px;top:2056.0px;width:30px;height:30px;" viewBox="0 0 30 30"><path d="M7.500 15V10.500A7.500 7.500 0 0 1 22.500 10.500V15" fill="none" stroke="#a9a9a9" stroke-width="3.800"/><rect x="3" y="14.200" width="24" height="15.600" rx="2.200" fill="#6e6e6e"/></svg>
<span class="t" style="left:2343.0px;top:2054px;line-height:33px;font-size:24px;color:#1e1e1e;letter-spacing:-0.41px;">Magnifier</span>
<div style="left:2446.8px;top:2048.4px;width:188.19999999999982px;height:43.8px;background:#fff;border:2px solid #b4b4b4;border-radius:6px;box-sizing:border-box;background:linear-gradient(#fff,#f0f0f0);"></div>
<div style="left:2449.8px;top:2051.5px;width:156.69999999999982px;height:37.6px;background:#fff;border-right:1.5px solid #c4c4c4;box-sizing:border-box;border-radius:3px 0 0 3px"></div>
<svg style="left:2612px;top:2058px;width:16px;height:26px" viewBox="0 0 16 26" fill="#555"><path d="M0 9L8 1L16 9Z"/><path d="M0 17L8 25L16 17Z"/></svg>
<span class="t" style="left:2456.0px;top:2054px;line-height:33px;font-size:24px;color:#1e1e1e;letter-spacing:-1.34px;">100%</span>
<span class="t" style="left:2655.0px;top:2054px;line-height:33px;font-size:24px;color:#1e1e1e;letter-spacing:-0.55px;">Rotation</span>
<div style="left:2761px;top:2048.4px;width:180px;height:43.8px;background:#fff;border:2px solid #b4b4b4;border-radius:6px;box-sizing:border-box;background:linear-gradient(#fff,#f0f0f0);"></div>
<div style="left:2764px;top:2051.5px;width:148.5px;height:37.6px;background:#fff;border-right:1.5px solid #c4c4c4;box-sizing:border-box;border-radius:3px 0 0 3px"></div>
<svg style="left:2918px;top:2058px;width:16px;height:26px" viewBox="0 0 16 26" fill="#555"><path d="M0 9L8 1L16 9Z"/><path d="M0 17L8 25L16 17Z"/></svg>
<span class="t" style="left:2770.8px;top:2054px;line-height:33px;font-size:24px;color:#1e1e1e;letter-spacing:-0.80px;">0.0 °</span>
<div style="left:2954.3px;top:2056.3px;width:27.6px;height:27.2px;background:#fff;border:2px solid #c6c6c6;border-radius:2px;box-sizing:border-box"></div>
<svg style="left:2954.3px;top:2056.3px;width:27.6px;height:27.2px" viewBox="0 0 27 27"><path d="M6.5 13.5L11.5 20.5L20.5 6" fill="none" stroke="#1e1e1e" stroke-width="3.2"/></svg>
<span class="t" style="left:2993.4px;top:2054px;line-height:33px;font-size:24px;color:#1e1e1e;letter-spacing:-1.08px;">Render</span>
<svg style="left:3098.0px;top:2053.8px;width:32px;height:32px;" viewBox="0 0 32 32"><g fill="none" stroke="#757575" stroke-width="1.700"><ellipse cx="16" cy="17.500" rx="11.500" ry="12.500"/><ellipse cx="16" cy="17.500" rx="5" ry="12.500"/><path d="M16 5V30M5 12H27M5 23.500H27"/><path d="M1 17C6 8 10 4.500 16 4.500C22 4.500 26 8 31 17C22 19 10 19 1 17Z" stroke-linejoin="round"/><path d="M9 5.500L6.500 17.500M23 5.500L25.500 17.500"/></g></svg>
<span class="t" style="left:3135.2px;top:2054px;line-height:33px;font-size:24px;color:#1e1e1e;letter-spacing:-0.89px;">EPSG:32644</span>
<svg style="left:3313.3px;top:2056.5px;width:34px;height:34px;" viewBox="0 0 34 34"><path d="M17 4C26.500 4 33.500 9.500 33.500 16.500C33.500 20.500 31 24 27.500 26C28.500 28.500 30 30 32 31C28 31.500 24.500 30.500 22.500 28.500C20.800 29 19 29.200 17 29.200C7.500 29.200 0.600 23.500 0.600 16.500C0.600 9.500 7.500 4 17 4Z" fill="#6b6b6b"/></svg>
<div style="left:396px;top:335.8px;width:525.8px;height:972.7px;background:#fff;border:2px solid #969696;box-sizing:border-box;box-shadow:0 10px 24px rgba(0,0,0,.27),0 0 2px rgba(0,0,0,.10)"></div>
<div style="left:396px;top:1156.5px;width:525.8px;height:49.5px;background:#73a2ef"></div>
<span class="t" style="left:452.8px;top:344px;line-height:37px;font-size:28px;color:#262626;letter-spacing:0.22px;"><u>Z</u>oom to Layer</span>
<svg style="left:408.8px;top:346.0px;width:32px;height:32px;" viewBox="0 0 48 48"><rect x="6.8" y="5.600" width="26" height="25.600" fill="#ececec" stroke="#8a8a8a" stroke-width="2"/><line x1="19.7" y1="29.6" x2="3.8" y2="45.5" stroke="#3b3b3b" stroke-width="6.4"/><line x1="14.4" y1="34.9" x2="4.7" y2="44.6" stroke="#ffd321" stroke-width="3.5"/><line x1="19.7" y1="29.6" x2="14.4" y2="34.9" stroke="#0c0c0c" stroke-width="6.4"/><circle cx="31.7" cy="17.6" r="16.3" fill="#e9e9e9" stroke="#6c6c6c" stroke-width="2.2"/><path d="M20.9 16.7A11.5 11.5 0 0 1 32.6 6.1" fill="none" stroke="#ffffff" stroke-opacity="0.55" stroke-width="2.6" stroke-linecap="round"/><path d="M33 2.200A15.500 15.500 0 0 0 33 33Z" fill="#f1f1f1" opacity=".9"/><path d="M33 3V32.500" stroke="#cfcfcf" stroke-width="1"/></svg>
<span class="t" style="left:452.8px;top:394px;line-height:37px;font-size:28px;color:#bcbcbc;letter-spacing:0.28px;"><u>Z</u>oom to Selection</span>
<svg style="left:408.8px;top:396.0px;width:32px;height:32px;" viewBox="0 0 48 48"><rect x="6.8" y="5.600" width="26" height="25.600" fill="#eceae3" stroke="#e0ded6" stroke-width="2"/><line x1="19.7" y1="29.6" x2="3.8" y2="45.5" stroke="#d2d2d2" stroke-width="6.4"/><line x1="14.4" y1="34.9" x2="4.7" y2="44.6" stroke="#e6e3dc" stroke-width="3.5"/><line x1="19.7" y1="29.6" x2="14.4" y2="34.9" stroke="#cfcfcf" stroke-width="6.4"/><circle cx="31.7" cy="17.6" r="16.3" fill="#efefef" stroke="#d3d3d3" stroke-width="2.2"/><path d="M20.9 16.7A11.5 11.5 0 0 1 32.6 6.1" fill="none" stroke="#ffffff" stroke-opacity="0.4" stroke-width="2.6" stroke-linecap="round"/><path d="M33 3V32.500" stroke="#e4e4e4" stroke-width="1"/></svg>
<span class="t" style="left:452.8px;top:444px;line-height:37px;font-size:28px;color:#262626;letter-spacing:0.08px;"><u>S</u>how in Overview</span>
<svg style="left:410.0px;top:446.0px;width:32px;height:32px;" viewBox="0 0 32 32"><path d="M0.600 5.200C3 3.400 11 2.600 15.300 5.400C16 5.800 16.800 5.800 17.500 5.400C21.800 2.600 29.800 3.400 32.200 5.200L31.600 8L30.200 8.600C29.600 12.600 27.800 14.900 24.200 14.900C20.200 14.900 18.400 11.800 17.600 8.200C17.200 6.900 15.600 6.900 15.200 8.200C14.400 11.800 12.600 14.900 8.600 14.900C5 14.900 3.200 12.600 2.600 8.600L1.200 8Z" fill="#050505"/><path d="M4.300 6.600C6.500 5.200 11 5.200 13.400 6.800C13 9.800 11.700 12.600 8.600 12.600C5.700 12.600 4.600 10 4.300 6.600Z" fill="#fff"/><path d="M28.500 6.600C26.300 5.200 21.800 5.200 19.400 6.800C19.800 9.800 21.100 12.600 24.200 12.600C27.100 12.600 28.200 10 28.500 6.600Z" fill="#fff"/><rect x="19" y="19.400" width="12.800" height="12.600" rx="2.800" fill="#4c9a5e"/><rect x="20" y="20.400" width="10.800" height="5" rx="2" fill="#7ab888" opacity=".6"/><path d="M25.400 21.900V29.500M21.600 25.700H29.200" stroke="#fff" stroke-width="2.800" stroke-linecap="round"/></svg>
<span class="t" style="left:452.8px;top:494px;line-height:37px;font-size:28px;color:#262626;letter-spacing:0.11px;">Show Feature Count</span>
<div style="left:412.1px;top:498.4px;width:27.8px;height:27.4px;background:#fff;border:2px solid #c4c4c4;border-radius:2px;box-sizing:border-box"></div>
<span class="t" style="left:452.8px;top:544px;line-height:37px;font-size:28px;color:#262626;letter-spacing:0.05px;">Copy Layer</span>
<span class="t" style="left:452.8px;top:594px;line-height:37px;font-size:28px;color:#262626;letter-spacing:-0.33px;">Re<u>n</u>ame Layer</span>
<span class="t" style="left:452.8px;top:648px;line-height:37px;font-size:28px;color:#262626;letter-spacing:0.18px;"><u>D</u>uplicate Layer</span>
<svg style="left:410.0px;top:650.4px;width:32px;height:32px;" viewBox="0 0 32 32"><rect x="2.200" y="4.600" width="24" height="24" fill="#8c8c84" stroke="#6d6d66" stroke-width="1.400"/><rect x="5" y="1.400" width="24" height="24" fill="#ececec" stroke="#7b7b74" stroke-width="1.800"/><rect x="17.800" y="17.400" width="12" height="12" rx="2.400" fill="#c9a100"/><line x1="25.0" y1="23.4" x2="28.0" y2="23.4" stroke="#fff" stroke-width="1.700" stroke-linecap="round"/><line x1="24.6" y1="24.2" x2="26.8" y2="26.4" stroke="#fff" stroke-width="1.700" stroke-linecap="round"/><line x1="23.8" y1="24.6" x2="23.8" y2="27.6" stroke="#fff" stroke-width="1.700" stroke-linecap="round"/><line x1="23.0" y1="24.2" x2="20.8" y2="26.4" stroke="#fff" stroke-width="1.700" stroke-linecap="round"/><line x1="22.6" y1="23.4" x2="19.6" y2="23.4" stroke="#fff" stroke-width="1.700" stroke-linecap="round"/><line x1="23.0" y1="22.6" x2="20.8" y2="20.4" stroke="#fff" stroke-width="1.700" stroke-linecap="round"/><line x1="23.8" y1="22.2" x2="23.8" y2="19.2" stroke="#fff" stroke-width="1.700" stroke-linecap="round"/><line x1="24.6" y1="22.6" x2="26.8" y2="20.4" stroke="#fff" stroke-width="1.700" stroke-linecap="round"/></svg>
<span class="t" style="left:452.8px;top:698px;line-height:37px;font-size:28px;color:#262626;letter-spacing:-0.41px;"><u>R</u>emove Layer...</span>
<svg style="left:410.0px;top:700.2px;width:32px;height:32px;" viewBox="0 0 32 32"><rect x="2.800" y="3.200" width="20.400" height="20.400" fill="#ececec" stroke="#7b7b74" stroke-width="2"/><rect x="17.600" y="20" width="11.800" height="9.800" rx="2.600" fill="#fb3045"/><path d="M20.200 24.900H26.800" stroke="#fff" stroke-width="2.400" stroke-linecap="round"/></svg>
<span class="t" style="left:452.8px;top:752px;line-height:37px;font-size:28px;color:#262626;letter-spacing:0.45px;">Move to <u>T</u>op</span>
<span class="t" style="left:452.8px;top:806px;line-height:37px;font-size:28px;color:#262626;letter-spacing:0.44px;"><u>O</u>pen Attribute Table</span>
<svg style="left:410.0px;top:807.6px;width:32px;height:32px;" viewBox="0 0 48 48"><rect x="5.200" y="5.200" width="37.600" height="37.600" fill="#e9e9e9" stroke="#6a9bd1" stroke-width="2.400"/><rect x="6.400" y="6.400" width="35.200" height="9" fill="#b5d3f0"/><path d="M4.200 16.400H43.800" stroke="#6a9bd1" stroke-width="2"/><path d="M10.200 11H17.800M21.800 11H37.400" stroke="#5c8dc4" stroke-width="3.600"/><path d="M10.200 20.8H17.800M21.800 20.8H37.400" stroke="#5c8dc4" stroke-width="2.200"/><path d="M10.200 26.8H17.800M21.800 26.8H37.400" stroke="#5c8dc4" stroke-width="2.200"/><path d="M10.200 32.6H17.800M21.800 32.6H37.400" stroke="#5c8dc4" stroke-width="2.200"/><path d="M10.200 38.4H17.800M21.800 38.4H37.400" stroke="#5c8dc4" stroke-width="2.200"/></svg>
<span class="t" style="left:452.8px;top:856px;line-height:37px;font-size:28px;color:#262626;letter-spacing:0.22px;">Toggle Editing</span>
<svg style="left:410.0px;top:857.8px;width:32px;height:32px;" viewBox="0 0 48 48"><g opacity="1"><path d="M8.5 48.3L18.5 41.3L9.3 36.1Z" fill="#e4e4e4" stroke="#6e6a1a" stroke-width="1" stroke-linejoin="round"/><path d="M8.5 48.3L12.3 45.6L8.8 43.7Z" fill="#444"/><path d="M18.5 41.3L36.2 9.9L27.1 4.7L9.3 36.1Z" fill="#d2c500" stroke="#6e6a1a" stroke-width="1.200" stroke-linejoin="round"/><path d="M14.6 39.1L32.3 7.7L29.6 6.1L11.9 37.5Z" fill="#fff766"/><path d="M36.2 9.9L38.1 6.6L28.9 1.4L27.1 4.7Z" fill="#ededed" stroke="#6e6a1a" stroke-width="1" stroke-linejoin="round"/></g></svg>
<span class="t" style="left:452.8px;top:906px;line-height:37px;font-size:28px;color:#262626;letter-spacing:-0.34px;"><u>F</u>ilter...</span>
<span class="t" style="left:452.8px;top:956px;line-height:37px;font-size:28px;color:#262626;letter-spacing:-0.11px;">Change Data Source...</span>
<span class="t" style="left:452.8px;top:1010px;line-height:37px;font-size:28px;color:#262626;letter-spacing:0.05px;"><u>S</u>et Layer Scale Visibility...</span>
<span class="t" style="left:452.8px;top:1060px;line-height:37px;font-size:28px;color:#262626;letter-spacing:-0.76px;">Set CRS</span>
<span class="t" style="left:452.8px;top:1113px;line-height:37px;font-size:28px;color:#262626;letter-spacing:-0.09px;">Make Permanent...</span>
<svg style="left:410.0px;top:1115.4px;width:32px;height:32px;" viewBox="0 0 48 48"><rect x="4.8" y="2.6" width="38.8" height="41" rx="5" fill="#6a9bd1" stroke="#355b86" stroke-width="1.6"/><rect x="10.6" y="4.4" width="27.4" height="17.4" rx="1.5" fill="#ececec" stroke="#8a8a8a" stroke-opacity="0.8" stroke-width="1"/><path d="M13.4 9.2H35.2M13.4 13.2H35.2M13.4 17.2H35.2" stroke="#5a5a5a" stroke-width="1.8"/><rect x="12.4" y="29" width="24" height="14.4" rx="1.2" fill="#e6e6e6" stroke="#7d8792" stroke-opacity="0.9" stroke-width="1.2"/><rect x="15.4" y="32.2" width="5.8" height="7.6" fill="#3a5a80"/></svg>
<span class="t" style="left:452.8px;top:1163px;line-height:37px;font-size:28px;color:#fff;letter-spacing:0.29px;">Export</span>
<span class="t" style="left:452.8px;top:1217px;line-height:37px;font-size:28px;color:#262626;letter-spacing:0.17px;">Styles</span>
<span class="t" style="left:452.8px;top:1267px;line-height:37px;font-size:28px;color:#262626;letter-spacing:0.10px;"><u>P</u>roperties...</span>
<div style="left:405px;top:636.0px;width:506px;height:1.5px;background:#cdcdcd"></div>
<div style="left:405px;top:739.5999999999999px;width:506px;height:1.5px;background:#cdcdcd"></div>
<div style="left:405px;top:793.8px;width:506px;height:1.5px;background:#cdcdcd"></div>
<div style="left:405px;top:997.5999999999999px;width:506px;height:1.5px;background:#cdcdcd"></div>
<div style="left:405px;top:1101.6px;width:506px;height:1.5px;background:#cdcdcd"></div>
<div style="left:405px;top:1205.3px;width:506px;height:1.5px;background:#cdcdcd"></div>
<svg style="left:902px;top:1069.5px;width:8px;height:16px" viewBox="0 0 8 16"><path d="M0 0L8 8L0 16Z" fill="#4d4d4d"/></svg>
<svg style="left:902px;top:1171.6px;width:8px;height:16px" viewBox="0 0 8 16"><path d="M0 0L8 8L0 16Z" fill="#c5d7f6"/></svg>
<svg style="left:902px;top:1226.2px;width:8px;height:16px" viewBox="0 0 8 16"><path d="M0 0L8 8L0 16Z" fill="#4d4d4d"/></svg>
<div style="left:920.2px;top:1155.5px;width:517.5px;height:200px;background:#fff;border:2px solid #969696;box-sizing:border-box;box-shadow:0 10px 24px rgba(0,0,0,.27),0 0 2px rgba(0,0,0,.10);clip-path:inset(-70px -70px -70px -14px)"></div>
<div style="left:920.2px;top:1156.5px;width:516.0px;height:49.5px;background:#73a2ef"></div>
<div style="left:920.2px;top:1155.5px;width:517.5px;height:1.5px;background:#6f92cf"></div>
<span class="t" style="left:977.4px;top:1164px;line-height:37px;font-size:28px;color:#fff;letter-spacing:-0.25px;">Save Features As...</span>
<span class="t" style="left:977.4px;top:1214px;line-height:37px;font-size:28px;color:#bcbcbc;letter-spacing:-0.04px;">Save Selected Features As...</span>
<span class="t" style="left:977.4px;top:1264px;line-height:37px;font-size:28px;color:#262626;letter-spacing:-0.08px;">Save as Layer Definition File...</span>
<span class="t" style="left:977.4px;top:1314px;line-height:37px;font-size:28px;color:#262626;letter-spacing:-0.28px;">Save as QGIS Layer Style File...</span>
</div></body></html>
